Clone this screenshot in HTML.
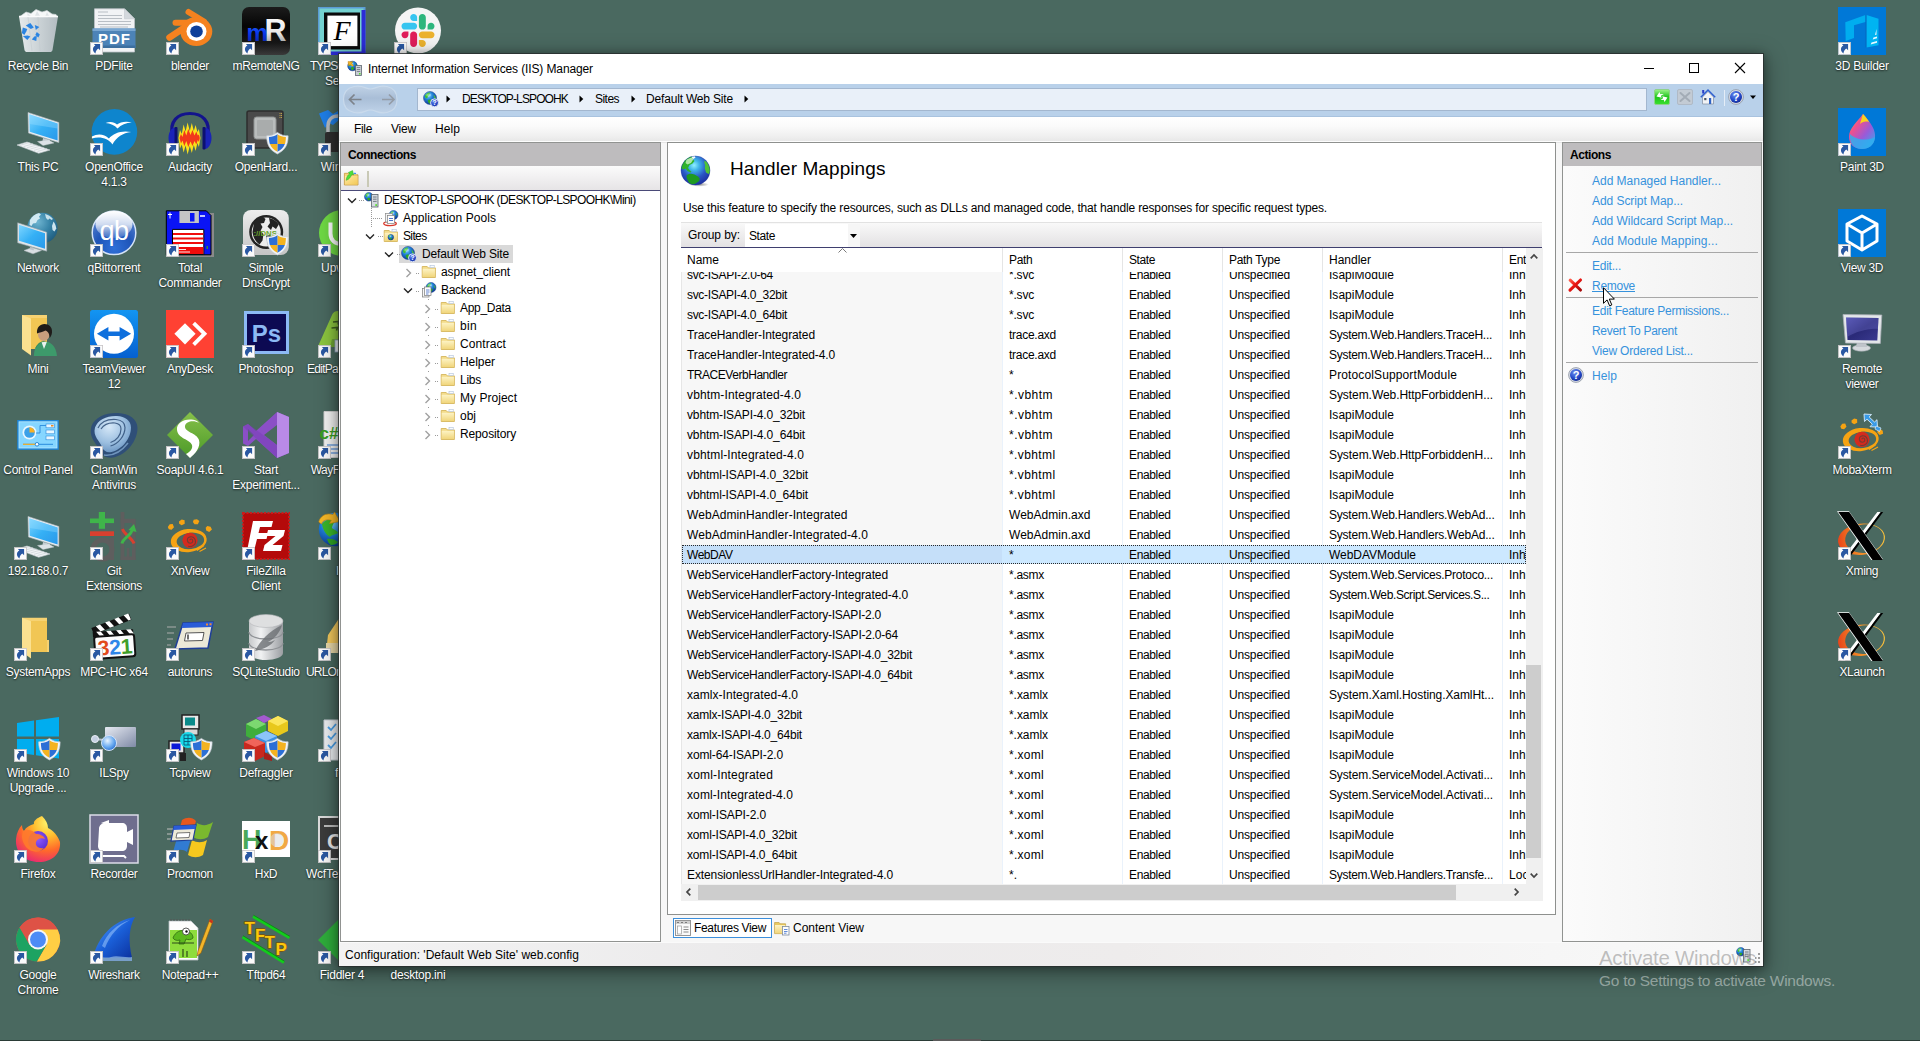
<!DOCTYPE html>
<html lang="en"><head><meta charset="utf-8"><title>Internet Information Services (IIS) Manager</title>
<style>
html,body{margin:0;padding:0}
body{width:1920px;height:1041px;overflow:hidden;position:relative;background:#4a6960;font-family:"Liberation Sans",sans-serif;font-size:11.5px;color:#000}
div,span,svg,a{position:absolute;box-sizing:border-box}
.t{white-space:pre;display:block}
.lbl{color:#fff;text-align:center;font-size:12px;line-height:15px;text-shadow:0 1px 2px rgba(0,0,0,.6),0 0 1.5px rgba(0,0,0,.4);white-space:pre;display:block}
svg{overflow:visible}

</style></head>
<body>
<svg width="0" height="0" style="left:0;top:0"><defs><radialGradient id="gg" cx=".38" cy=".3" r=".75"><stop offset="0" stop-color="#7fd0ff"/><stop offset=".45" stop-color="#1f7fd6"/><stop offset="1" stop-color="#0b2f8a"/></radialGradient><radialGradient id="hq" cx=".4" cy=".3" r=".8"><stop offset="0" stop-color="#6d8ff0"/><stop offset=".6" stop-color="#2348c8"/><stop offset="1" stop-color="#0d2282"/></radialGradient><linearGradient id="fold" x1="0" y1="0" x2="0" y2="1"><stop offset="0" stop-color="#fdf3c4"/><stop offset="1" stop-color="#f1d67c"/></linearGradient><linearGradient id="grn" x1="0" y1="0" x2="0" y2="1"><stop offset="0" stop-color="#9df58a"/><stop offset=".5" stop-color="#1fc41c"/><stop offset="1" stop-color="#39e02f"/></linearGradient><linearGradient id="fy" x1="0" y1="0" x2="1" y2="1"><stop offset="0" stop-color="#ffe9a6"/><stop offset="1" stop-color="#f3c956"/></linearGradient></defs></svg>
<svg style="left:14px;top:7px" width="48" height="48" viewBox="0 0 48 48"><defs><linearGradient id="rb" x1="0" y1="0" x2="1" y2="0"><stop offset="0" stop-color="#eef1f3"/><stop offset=".45" stop-color="#d5dbdf"/><stop offset="1" stop-color="#b9c1c7"/></linearGradient></defs><path d="M6 9.5l6-4.5 5 1.5 5-4 6 2.5 5-1.5 5 3.5 4 .5 1.5 2.5z" fill="#f6f8f9" stroke="#ccd2d6" stroke-width=".7"/><path d="M13 6l4 3-3 1zM23 4l3 5-5 0zM33 5l2 4-4 1z" fill="#dfe4e7"/><path d="M5 9.5h39l-5.5 33.5c-.3 1.4-1.3 2-2.8 2H13.3c-1.5 0-2.5-.6-2.8-2z" fill="url(#rb)" opacity=".95"/><path d="M5 9.5h39" stroke="#fafbfc" stroke-width="1.4"/><path d="M24 10l2 34M14 10l4 34M35 10l-4 34" stroke="#c3cacf" stroke-width=".8" opacity=".7"/><g fill="#2a84e2" transform="translate(-3.2 1)"><path d="M15 17.5l4.5-2.5 3.5 4.5-3 1.5z"/><path d="M11 25l1-5.5 4.5 1.5-1 2.5-2 3.5z"/><path d="M12 28l4.5 4 3-3.5-2.5-1z"/><path d="M21 31.5l4.5 1.5 .5-5-2.5 .5z"/><path d="M24 17l1 5 3.5-3z"/><path d="M26 24l3 2.5-1.5 3-3-2.5z"/></g></svg>
<span class="lbl" style="left:-22px;width:120px;top:59px;letter-spacing:-0.259px;padding-left:-0.259px">Recycle Bin</span>
<svg style="left:90px;top:7px" width="48" height="48" viewBox="0 0 48 48"><path d="M4.5 1.8h30l10 10V45H4.5z" fill="#f1f3f5" stroke="#bcc2c8" stroke-width=".8"/><path d="M34.5 1.8v10h10z" fill="#d3d8dd" stroke="#bcc2c8" stroke-width=".5"/><path d="M8 5h10M8 8.5h24M8 11.5h24M8 14.5h33M8 17.5h33M10 20h28" stroke="#b9bfc5" stroke-width="1.1"/><rect x="2.5" y="21.5" width="43" height="19.5" fill="#4c83b7"/><rect x="2.5" y="21.5" width="43" height="2.5" fill="#79a7d2"/><rect x="2.5" y="38.5" width="43" height="2.5" fill="#3c6f9f"/><text x="24.5" y="36.7" font-size="15" font-weight="bold" fill="#fff" text-anchor="middle" letter-spacing="1" font-family="Liberation Sans,sans-serif">PDF</text><g transform="translate(0 35)"><rect x=".4" y=".4" width="12.2" height="12.2" fill="#fbfbfb" stroke="#c6c3c6" stroke-width=".8"/><path d="M3.9 2.1H10.1V8.2L8.3 6.6C6.5 7.8 5.6 9.5 5.5 11.6 3.3 10 2.3 7.6 3.3 5.6 3.8 4.6 4.6 3.9 5.4 3.5z" fill="#2a58a2"/></g></svg>
<span class="lbl" style="left:54px;width:120px;top:59px;letter-spacing:-0.253px;padding-left:-0.253px">PDFlite</span>
<svg style="left:166px;top:7px" width="48" height="48" viewBox="0 0 48 48"><g stroke="#f5821f" stroke-linecap="round" fill="none"><path d="M22.5 5L38 14.5" stroke-width="6"/><path d="M9.5 15.8H27" stroke-width="6"/><path d="M3.5 30.5L20 19.5" stroke-width="6.5"/></g><ellipse cx="30.3" cy="24.5" rx="16" ry="14.6" fill="#f5821f"/><ellipse cx="30.5" cy="24.5" rx="10" ry="9.5" fill="#fff"/><ellipse cx="30.5" cy="24.5" rx="6.3" ry="6" fill="#0d3f9a"/><g transform="translate(0 35)"><rect x=".4" y=".4" width="12.2" height="12.2" fill="#fbfbfb" stroke="#c6c3c6" stroke-width=".8"/><path d="M3.9 2.1H10.1V8.2L8.3 6.6C6.5 7.8 5.6 9.5 5.5 11.6 3.3 10 2.3 7.6 3.3 5.6 3.8 4.6 4.6 3.9 5.4 3.5z" fill="#2a58a2"/></g></svg>
<span class="lbl" style="left:130px;width:120px;top:59px;letter-spacing:-0.257px;padding-left:-0.257px">blender</span>
<svg style="left:242px;top:7px" width="48" height="48" viewBox="0 0 48 48"><defs><linearGradient id="mr" x1="0" y1="0" x2="0" y2="1"><stop offset="0" stop-color="#1c1c1c"/><stop offset=".4" stop-color="#050505"/><stop offset=".75" stop-color="#161616"/><stop offset="1" stop-color="#3a3a3a"/></linearGradient><linearGradient id="mrm" x1="0" y1="0" x2="0" y2="1"><stop offset="0" stop-color="#3b7bff"/><stop offset=".5" stop-color="#0a3cf0"/><stop offset="1" stop-color="#0a1f9a"/></linearGradient><linearGradient id="mrr" x1="0" y1="0" x2="0" y2="1"><stop offset="0" stop-color="#ffffff"/><stop offset=".6" stop-color="#e8e8e8"/><stop offset="1" stop-color="#8a8a8a"/></linearGradient></defs><rect x="0" y="0" width="48" height="48" rx="7" fill="url(#mr)"/><text x="4.5" y="33.6" font-size="24" font-weight="bold" fill="url(#mrm)" font-family="Liberation Sans,sans-serif">m</text><text x="22.5" y="33.6" font-size="30.5" font-weight="bold" fill="url(#mrr)" font-family="Liberation Sans,sans-serif">R</text><g transform="translate(0 35)"><rect x=".4" y=".4" width="12.2" height="12.2" fill="#fbfbfb" stroke="#c6c3c6" stroke-width=".8"/><path d="M3.9 2.1H10.1V8.2L8.3 6.6C6.5 7.8 5.6 9.5 5.5 11.6 3.3 10 2.3 7.6 3.3 5.6 3.8 4.6 4.6 3.9 5.4 3.5z" fill="#2a58a2"/></g></svg>
<span class="lbl" style="left:206px;width:120px;top:59px;letter-spacing:-0.350px;padding-left:-0.350px">mRemoteNG</span>
<svg style="left:318px;top:7px" width="48" height="48" viewBox="0 0 48 48"><rect x="0" y="0" width="47.5" height="48" fill="#5b9bd4"/><rect x="1.5" y="1.5" width="44" height="45" fill="#74d2d0"/><rect x="43.5" y="3" width="4" height="45" fill="#2c2cd8"/><rect x="4" y="44.5" width="43.5" height="3.5" fill="#2c2cd8"/><rect x="6" y="5.5" width="36" height="37" fill="#0a0a0a"/><rect x="9.4" y="8.6" width="30" height="30.5" fill="#fff"/><text x="24" y="33" font-size="28" font-style="italic" fill="#000" text-anchor="middle" font-family="Liberation Serif,serif">F</text><g transform="translate(0 35)"><rect x=".4" y=".4" width="12.2" height="12.2" fill="#fbfbfb" stroke="#c6c3c6" stroke-width=".8"/><path d="M3.9 2.1H10.1V8.2L8.3 6.6C6.5 7.8 5.6 9.5 5.5 11.6 3.3 10 2.3 7.6 3.3 5.6 3.8 4.6 4.6 3.9 5.4 3.5z" fill="#2a58a2"/></g></svg>
<span class="lbl" style="left:310px;text-align:left;top:59px;letter-spacing:-1.028px">TYPSoft FTP</span>
<span class="lbl" style="left:282px;width:120px;top:74px;letter-spacing:-0.265px;padding-left:-0.265px">Server</span>
<svg style="left:394px;top:7px" width="48" height="48" viewBox="0 0 48 48"><circle cx="24" cy="23.6" r="23" fill="#f5f5f5"/><g transform="translate(7.5 7) scale(.2687)"><path d="M25.8 77.6c0 7.1-5.8 12.9-12.9 12.9S0 84.7 0 77.6s5.8-12.9 12.9-12.9h12.9v12.9zm6.5 0c0-7.1 5.8-12.9 12.9-12.9s12.9 5.8 12.9 12.9v32.3c0 7.1-5.8 12.9-12.9 12.9s-12.9-5.8-12.9-12.9V77.6z" fill="#e01e5a"/><path d="M45.2 25.8c-7.1 0-12.9-5.8-12.9-12.9S38.1 0 45.2 0s12.9 5.8 12.9 12.9v12.9H45.2zm0 6.5c7.1 0 12.9 5.8 12.9 12.9s-5.8 12.9-12.9 12.9H12.9C5.8 58.1 0 52.3 0 45.2s5.8-12.9 12.9-12.9h32.3z" fill="#36c5f0"/><path d="M97 45.2c0-7.1 5.8-12.9 12.9-12.9s12.9 5.8 12.9 12.9-5.8 12.9-12.9 12.9H97V45.2zm-6.5 0c0 7.1-5.8 12.9-12.9 12.9s-12.9-5.8-12.9-12.9V12.9C64.7 5.8 70.5 0 77.6 0s12.9 5.8 12.9 12.9v32.3z" fill="#2eb67d"/><path d="M77.6 97c7.1 0 12.9 5.8 12.9 12.9s-5.8 12.9-12.9 12.9-12.9-5.8-12.9-12.9V97h12.9zm0-6.5c-7.1 0-12.9-5.8-12.9-12.9s5.8-12.9 12.9-12.9h32.3c7.1 0 12.9 5.8 12.9 12.9s-5.8 12.9-12.9 12.9H77.6z" fill="#ecb22e"/></g><g transform="translate(0 35)"><rect x=".4" y=".4" width="12.2" height="12.2" fill="#fbfbfb" stroke="#c6c3c6" stroke-width=".8"/><path d="M3.9 2.1H10.1V8.2L8.3 6.6C6.5 7.8 5.6 9.5 5.5 11.6 3.3 10 2.3 7.6 3.3 5.6 3.8 4.6 4.6 3.9 5.4 3.5z" fill="#2a58a2"/></g></svg>
<span class="lbl" style="left:358px;width:120px;top:59px;letter-spacing:-0.264px;padding-left:-0.264px">Slack</span>
<svg style="left:14px;top:108px" width="48" height="48" viewBox="0 0 48 48"><defs><linearGradient id="scr" x1="0" y1="0" x2="1" y2="1"><stop offset="0" stop-color="#7fd6ff"/><stop offset=".5" stop-color="#35b0f5"/><stop offset="1" stop-color="#2a98ea"/></linearGradient></defs><path d="M14 4.5l30.8 10v20L14.5 25z" fill="#e9eef2" stroke="#b3bcc3" stroke-width=".6"/><path d="M15.3 6.3l28.3 9.2v17L15.7 23.8z" fill="url(#scr)"/><path d="M15.3 6.3l28.3 9.2v5L15.5 16z" fill="#9fe0ff" opacity=".35"/><path d="M29 30l7 2-.5 3.5-7-2z" fill="#c5cdd3"/><path d="M23.5 33.5l11 -1.5 5.5 3-11 2.5z" fill="#dde3e7" stroke="#c2cad0" stroke-width=".4"/><path d="M3 37l10-3 23 8-11.3 3.3z" fill="#f0f3f5" stroke="#c6cdd2" stroke-width=".6"/><path d="M6 37.3l9.5-2.8M9.5 38.6l9.5-2.8M13 39.8l9.5-2.8M16.5 41l9.5-2.8M20 42.3l9.5-2.8M23.5 43.5l9.5-2.8" stroke="#cbd2d7" stroke-width=".7"/></svg>
<span class="lbl" style="left:-22px;width:120px;top:160px;letter-spacing:-0.274px;padding-left:-0.274px">This PC</span>
<svg style="left:90px;top:108px" width="48" height="48" viewBox="0 0 48 48"><circle cx="24.4" cy="23.9" r="22.8" fill="#0e85cd"/><path d="M1.9 28.5c6-3.5 12.5-2.5 17 2 4.5-5.5 13-8.5 22.3-6.5-8.5 1-14.5 5-18.8 12.4C18.5 30.5 10 28 1.9 30.5z" fill="#fff"/><path d="M15.6 15c4.5-1.8 8.8-1 11.4 1.5 3-2.7 9.4-3.7 14.9-2-6 .3-10.8 2.4-14.4 6-2.8-3.4-7.3-5-11.9-5.5z" fill="#fff"/><g transform="translate(0 35)"><rect x=".4" y=".4" width="12.2" height="12.2" fill="#fbfbfb" stroke="#c6c3c6" stroke-width=".8"/><path d="M3.9 2.1H10.1V8.2L8.3 6.6C6.5 7.8 5.6 9.5 5.5 11.6 3.3 10 2.3 7.6 3.3 5.6 3.8 4.6 4.6 3.9 5.4 3.5z" fill="#2a58a2"/></g></svg>
<span class="lbl" style="left:54px;width:120px;top:160px;letter-spacing:-0.272px;padding-left:-0.272px">OpenOffice</span>
<span class="lbl" style="left:54px;width:120px;top:175px;letter-spacing:-0.240px;padding-left:-0.240px">4.1.3</span>
<svg style="left:166px;top:108px" width="48" height="48" viewBox="0 0 48 48"><path d="M6.5 28C3 13 12 5.5 24 5.5S45 13 41.5 28" fill="none" stroke="#13138c" stroke-width="3.2"/><path d="M9.5 19.5c-4 0-7 4.5-7 10.5s3 11 7 11z" fill="#1a23b8"/><path d="M38.5 19.5c4 0 7 4.5 7 10.5s-3 11-7 11z" fill="#1a23b8"/><rect x="8.5" y="19" width="3" height="22.5" rx="1" fill="#0d1170"/><rect x="36.5" y="19" width="3" height="22.5" rx="1" fill="#0d1170"/><path d="M12.5 30l1.5-8 1.8 4 1.8-9.5 2 7 2-9 2.2 8.5 2-8 2 8 1.8-6 1.8 7 1.5-3 1.6 9-1.6 9-1.5-4-1.8 8-1.8-6-2 8-2-7-2.2 8.5-2-9-2 7-1.8-8-1.8 4z" fill="#fbe01a"/><path d="M13.5 30l1.5-4 1.5 3 1.8-7 2 5.5 2-6.5 2.2 6 2-5 2 5.5 1.8-4 1.5 4 1.2-1 .8 3.5-.8 4-1.2-2-1.5 4.5-1.8-3.5-2 5-2-4.5-2.2 5.5-2-6-2 5-1.8-5.5-1.5 3z" fill="#f2381c"/><g transform="translate(0 35)"><rect x=".4" y=".4" width="12.2" height="12.2" fill="#fbfbfb" stroke="#c6c3c6" stroke-width=".8"/><path d="M3.9 2.1H10.1V8.2L8.3 6.6C6.5 7.8 5.6 9.5 5.5 11.6 3.3 10 2.3 7.6 3.3 5.6 3.8 4.6 4.6 3.9 5.4 3.5z" fill="#2a58a2"/></g></svg>
<span class="lbl" style="left:130px;width:120px;top:160px;letter-spacing:-0.259px;padding-left:-0.259px">Audacity</span>
<svg style="left:242px;top:108px" width="48" height="48" viewBox="0 0 48 48"><rect x="5" y="3" width="36" height="37" rx="2" fill="#4a4a4a"/><rect x="5" y="3" width="36" height="37" rx="2" fill="none" stroke="#2e2e2e" stroke-width="1.5"/><rect x="12" y="9" width="22" height="22" rx="2.5" fill="#b9bcbc" stroke="#8e9191" stroke-width="1"/><rect x="15" y="12" width="16" height="16" rx="1" fill="#a9acac"/><path d="M38 5v6M39.5 5v6" stroke="#d8b64a" stroke-width=".8" stroke-dasharray="1 1"/><g transform="translate(35.4 24.4) scale(1.13 .98) translate(-35.4 -24.4)"><path d="M35.4 24.4c3 2.5 6 3.5 9.5 3.5 0 9-2.5 14.5-9.5 18.5-7-4-9.5-9.5-9.5-18.5 3.5 0 6.5-1 9.5-3.5z" fill="#f0f4f8" stroke="#c8ced6" stroke-width=".6"/><path d="M35.4 26.4c2.3 1.8 4.8 2.7 7.5 2.8 0 3-.3 5.2-.8 7H35.4z" fill="#f4b320"/><path d="M35.4 26.4c-2.3 1.8-4.8 2.7-7.5 2.8 0 3 .3 5.2 .8 7H35.4z" fill="#2c6fd6"/><path d="M35.4 36.2h6.6c-1.2 3.5-3.3 6-6.6 8z" fill="#2c6fd6"/><path d="M35.4 36.2h-6.6c1.2 3.5 3.3 6 6.6 8z" fill="#f4b320"/></g><g transform="translate(0 35)"><rect x=".4" y=".4" width="12.2" height="12.2" fill="#fbfbfb" stroke="#c6c3c6" stroke-width=".8"/><path d="M3.9 2.1H10.1V8.2L8.3 6.6C6.5 7.8 5.6 9.5 5.5 11.6 3.3 10 2.3 7.6 3.3 5.6 3.8 4.6 4.6 3.9 5.4 3.5z" fill="#2a58a2"/></g></svg>
<span class="lbl" style="left:206px;width:120px;top:160px;letter-spacing:-0.267px;padding-left:-0.267px">OpenHard...</span>
<svg style="left:318px;top:108px" width="48" height="48" viewBox="0 0 48 48"><path d="M1 5.5l9-3.5 5 4 5-3 1 9-6 5-4-2-4 5z" fill="#1f7fe8"/><path d="M10 25v-7c0-6 4-10 10-10s10 4 10 10v7" fill="none" stroke="#b8bcc0" stroke-width="3.5"/><rect x="7" y="24" width="26" height="20" rx="2" fill="#2e2e2e"/><g transform="translate(0 35)"><rect x=".4" y=".4" width="12.2" height="12.2" fill="#fbfbfb" stroke="#c6c3c6" stroke-width=".8"/><path d="M3.9 2.1H10.1V8.2L8.3 6.6C6.5 7.8 5.6 9.5 5.5 11.6 3.3 10 2.3 7.6 3.3 5.6 3.8 4.6 4.6 3.9 5.4 3.5z" fill="#2a58a2"/></g></svg>
<span class="lbl" style="left:320.75px;text-align:left;top:160px;letter-spacing:0.000px">WinSCP</span>
<svg style="left:14px;top:209px" width="48" height="48" viewBox="0 0 48 48"><defs><radialGradient id="ng" cx=".35" cy=".3" r=".8"><stop offset="0" stop-color="#6fb4d0"/><stop offset=".5" stop-color="#3784a8"/><stop offset="1" stop-color="#1d587a"/></radialGradient></defs><circle cx="28.4" cy="19" r="15.2" fill="url(#ng)"/><path d="M16 11c2-3.5 5-6 9-7l2 1.5-2 2 1 2-2.5 1.5-1.5 3-3 .5-1.5 2.5-2-1z" fill="#dff1f7" opacity=".9"/><path d="M31 5c3 .5 6 2.5 8 5l-1.5 1-2-1.5-1.5 1.5-2-2z" fill="#dff1f7" opacity=".85"/><path d="M39.5 12.5c1.5 2 2.5 4.5 2.8 7l-1.8 3-2-1.5-.5-4z" fill="#dff1f7" opacity=".9"/><path d="M3.7 13.8l29 9.4v19L3.7 33.8z" fill="#dfe6ea" stroke="#9fa9b0" stroke-width=".6"/><path d="M5 15.8l26 8.5v15.5L5 31.8z" fill="url(#scr)"/><path d="M10 41.5l8-3 9.5 3-8.5 3.3z" fill="#d9dfe3" stroke="#b4bcc2" stroke-width=".5"/><path d="M16 38l4 1.3-.3 2.2-4-1.3z" fill="#bcc4ca"/></svg>
<span class="lbl" style="left:-22px;width:120px;top:261px;letter-spacing:-0.283px;padding-left:-0.283px">Network</span>
<svg style="left:90px;top:209px" width="48" height="48" viewBox="0 0 48 48"><defs><radialGradient id="qb" cx=".5" cy=".85" r=".9"><stop offset="0" stop-color="#2f6fd8"/><stop offset=".45" stop-color="#1f55b8"/><stop offset="1" stop-color="#6a90d4"/></radialGradient><linearGradient id="qbg" x1="0" y1="0" x2="0" y2="1"><stop offset="0" stop-color="#ffffff" stop-opacity="1"/><stop offset=".5" stop-color="#ffffff" stop-opacity=".75"/><stop offset="1" stop-color="#ffffff" stop-opacity=".12"/></linearGradient></defs><circle cx="24" cy="23.8" r="21.8" fill="url(#qb)" stroke="#d5e3f7" stroke-width="1.5"/><ellipse cx="24" cy="15.5" rx="18.5" ry="13.5" fill="url(#qbg)"/><text x="24" y="31" font-size="27" fill="#fff" text-anchor="middle" letter-spacing="-.5" font-family="Liberation Sans,sans-serif">qb</text><g transform="translate(0 35)"><rect x=".4" y=".4" width="12.2" height="12.2" fill="#fbfbfb" stroke="#c6c3c6" stroke-width=".8"/><path d="M3.9 2.1H10.1V8.2L8.3 6.6C6.5 7.8 5.6 9.5 5.5 11.6 3.3 10 2.3 7.6 3.3 5.6 3.8 4.6 4.6 3.9 5.4 3.5z" fill="#2a58a2"/></g></svg>
<span class="lbl" style="left:54px;width:120px;top:261px;letter-spacing:-0.226px;padding-left:-0.226px">qBittorrent</span>
<svg style="left:166px;top:209px" width="48" height="48" viewBox="0 0 48 48"><rect x="2" y="4" width="46" height="44" fill="#8a8a8a"/><path d="M.3 1.8h40l4.7 4.7v39.3H.3z" fill="#0a14f5" stroke="#000" stroke-width="1"/><rect x="13.4" y="2" width="19.5" height="12" fill="#c4c4c4"/><rect x="24" y="4" width="4.5" height="8.5" fill="#0a14f5"/><path d="M6.5 20.4h31.3v25H6.5z" fill="#fff" stroke="#000" stroke-width="1"/><path d="M7 25h30.3M7 29.5h30.3M7 34h30.3" stroke="#f00c0c" stroke-width="1.8"/><rect x="7" y="38" width="30.3" height="7" fill="#f00c0c"/><path d="M12 40.5h8M12 43h12" stroke="#fff" stroke-width=".9"/><path d="M2 5.5h4M4 3.5v6" stroke="#fff" stroke-width="1"/><path d="M34 7h5" stroke="#fff" stroke-width="1.5"/><rect x="40.5" y="37" width="1.5" height="3" fill="#3a8a3a"/><g transform="translate(0 35)"><rect x=".4" y=".4" width="12.2" height="12.2" fill="#fbfbfb" stroke="#c6c3c6" stroke-width=".8"/><path d="M3.9 2.1H10.1V8.2L8.3 6.6C6.5 7.8 5.6 9.5 5.5 11.6 3.3 10 2.3 7.6 3.3 5.6 3.8 4.6 4.6 3.9 5.4 3.5z" fill="#2a58a2"/></g></svg>
<span class="lbl" style="left:130px;width:120px;top:261px;letter-spacing:-0.228px;padding-left:-0.228px">Total</span>
<span class="lbl" style="left:130px;width:120px;top:276px;letter-spacing:-0.330px;padding-left:-0.330px">Commander</span>
<svg style="left:242px;top:209px" width="48" height="48" viewBox="0 0 48 48"><defs><linearGradient id="dc" x1="0" y1="0" x2="0" y2="1"><stop offset="0" stop-color="#ededed"/><stop offset="1" stop-color="#c4c4c4"/></linearGradient></defs><rect x="1" y="1" width="45.8" height="45" rx="8" fill="url(#dc)"/><circle cx="24.2" cy="23" r="17" fill="#232323"/><circle cx="24.2" cy="23" r="14.5" fill="#ececec"/><path d="M12 14c2-3 5-5.5 8.5-6.5l3 2.5-1.5 4-3.5 .5 2 3.5-2 4 3 3 -1 6.5-3 4c-4-3-6.5-7-7-12.5z" fill="#242424"/><path d="M27 9c4 .5 7.5 3 9.8 6.5L34 20l-3.5-2.5L29 21l-3.5-3.5 2.5-3.5z" fill="#242424"/><path d="M24 27l4-1 3 3-2 5-3 2.5z" fill="#242424"/><text x="11.5" y="26.5" font-size="7.8" font-weight="bold" fill="#6aa52e" font-family="Liberation Sans,sans-serif">://DNS</text><g transform="translate(35.4 24.4) scale(1.13 .98) translate(-35.4 -24.4)"><path d="M35.4 24.4c3 2.5 6 3.5 9.5 3.5 0 9-2.5 14.5-9.5 18.5-7-4-9.5-9.5-9.5-18.5 3.5 0 6.5-1 9.5-3.5z" fill="#f0f4f8" stroke="#c8ced6" stroke-width=".6"/><path d="M35.4 26.4c2.3 1.8 4.8 2.7 7.5 2.8 0 3-.3 5.2-.8 7H35.4z" fill="#f4b320"/><path d="M35.4 26.4c-2.3 1.8-4.8 2.7-7.5 2.8 0 3 .3 5.2 .8 7H35.4z" fill="#2c6fd6"/><path d="M35.4 36.2h6.6c-1.2 3.5-3.3 6-6.6 8z" fill="#2c6fd6"/><path d="M35.4 36.2h-6.6c1.2 3.5 3.3 6 6.6 8z" fill="#f4b320"/></g><g transform="translate(0 35)"><rect x=".4" y=".4" width="12.2" height="12.2" fill="#fbfbfb" stroke="#c6c3c6" stroke-width=".8"/><path d="M3.9 2.1H10.1V8.2L8.3 6.6C6.5 7.8 5.6 9.5 5.5 11.6 3.3 10 2.3 7.6 3.3 5.6 3.8 4.6 4.6 3.9 5.4 3.5z" fill="#2a58a2"/></g></svg>
<span class="lbl" style="left:206px;width:120px;top:261px;letter-spacing:-0.275px;padding-left:-0.275px">Simple</span>
<span class="lbl" style="left:206px;width:120px;top:276px;letter-spacing:-0.281px;padding-left:-0.281px">DnsCrypt</span>
<svg style="left:318px;top:209px" width="48" height="48" viewBox="0 0 48 48"><circle cx="24" cy="24" r="23" fill="#6fda44"/><path d="M12.5 13.5v11c0 6.5 4.5 10.5 11.5 10.5s11.5-4 11.5-10.5v-11" fill="none" stroke="#fff" stroke-width="4"/><g transform="translate(0 35)"><rect x=".4" y=".4" width="12.2" height="12.2" fill="#fbfbfb" stroke="#c6c3c6" stroke-width=".8"/><path d="M3.9 2.1H10.1V8.2L8.3 6.6C6.5 7.8 5.6 9.5 5.5 11.6 3.3 10 2.3 7.6 3.3 5.6 3.8 4.6 4.6 3.9 5.4 3.5z" fill="#2a58a2"/></g></svg>
<span class="lbl" style="left:321px;text-align:left;top:261px;letter-spacing:0.000px">Upwork</span>
<svg style="left:14px;top:310px" width="48" height="48" viewBox="0 0 48 48"><path d="M8 5h25v34H8z" fill="#f6d272"/><path d="M16 8h17v31H16z" fill="#f1c654"/><path d="M8 5l9 3.5v37l-9-6.5z" fill="#fbe190"/><path d="M19.8 46c.5-9 4-14.5 10.5-14.5S42 36 43 46z" fill="#3d9a6b"/><path d="M27.5 32l2.5 7 2.8-7z" fill="#eaf2ee"/><path d="M30.3 31.5c-4 0-7 3-9 7" fill="none" stroke="#2f7d55" stroke-width="1" opacity=".6"/><ellipse cx="29.8" cy="24.5" rx="5.8" ry="6.5" fill="#c79e7e"/><path d="M23 23.5c-.5-6 3-9.5 7.5-9.5s8 3 7.5 8.5c-.3 3-1.5 4.5-2.5 5.5.3-3-1-6.5-4-7.5-3 1.5-6 2-8.5 3z" fill="#1e1b19"/></svg>
<span class="lbl" style="left:-22px;width:120px;top:362px;letter-spacing:-0.248px;padding-left:-0.248px">Mini</span>
<svg style="left:90px;top:310px" width="48" height="48" viewBox="0 0 48 48"><defs><linearGradient id="tv" x1="0" y1="0" x2="0" y2="1"><stop offset="0" stop-color="#1395f2"/><stop offset="1" stop-color="#0660d0"/></linearGradient></defs><rect x="0" y="0" width="48" height="48" rx="2.5" fill="url(#tv)"/><circle cx="24" cy="23.8" r="20" fill="#fff"/><path d="M6.9 23.8l11.5-6.8v4.6h11.2V17l11.5 6.8-11.5 6.8V26H18.4v4.6z" fill="#0e6fdd"/><g transform="translate(0 35)"><rect x=".4" y=".4" width="12.2" height="12.2" fill="#fbfbfb" stroke="#c6c3c6" stroke-width=".8"/><path d="M3.9 2.1H10.1V8.2L8.3 6.6C6.5 7.8 5.6 9.5 5.5 11.6 3.3 10 2.3 7.6 3.3 5.6 3.8 4.6 4.6 3.9 5.4 3.5z" fill="#2a58a2"/></g></svg>
<span class="lbl" style="left:54px;width:120px;top:362px;letter-spacing:-0.296px;padding-left:-0.296px">TeamViewer</span>
<span class="lbl" style="left:54px;width:120px;top:377px;letter-spacing:-0.300px;padding-left:-0.300px">12</span>
<svg style="left:166px;top:310px" width="48" height="48" viewBox="0 0 48 48"><rect x="0" y="0" width="48" height="48" fill="#ff4133"/><path d="M8.4 23.8L19 13.2l10.6 10.6L19 34.4z" fill="#fff"/><path d="M26.3 14.4l2.7-2.7 12.2 12.1L29 35.9l-2.7-2.7 9.4-9.4z" fill="#fff"/><g transform="translate(0 35)"><rect x=".4" y=".4" width="12.2" height="12.2" fill="#fbfbfb" stroke="#c6c3c6" stroke-width=".8"/><path d="M3.9 2.1H10.1V8.2L8.3 6.6C6.5 7.8 5.6 9.5 5.5 11.6 3.3 10 2.3 7.6 3.3 5.6 3.8 4.6 4.6 3.9 5.4 3.5z" fill="#2a58a2"/></g></svg>
<span class="lbl" style="left:130px;width:120px;top:362px;letter-spacing:-0.309px;padding-left:-0.309px">AnyDesk</span>
<svg style="left:242px;top:310px" width="48" height="48" viewBox="0 0 48 48"><rect x="2" y="1" width="45" height="43" fill="#8cb9f4"/><rect x="5" y="4" width="39" height="37" fill="#0c0a52"/><text x="24.5" y="32" font-size="24" font-weight="bold" fill="#8cb9f4" text-anchor="middle" font-family="Liberation Sans,sans-serif">Ps</text><g transform="translate(0 35)"><rect x=".4" y=".4" width="12.2" height="12.2" fill="#fbfbfb" stroke="#c6c3c6" stroke-width=".8"/><path d="M3.9 2.1H10.1V8.2L8.3 6.6C6.5 7.8 5.6 9.5 5.5 11.6 3.3 10 2.3 7.6 3.3 5.6 3.8 4.6 4.6 3.9 5.4 3.5z" fill="#2a58a2"/></g></svg>
<span class="lbl" style="left:206px;width:120px;top:362px;letter-spacing:-0.287px;padding-left:-0.287px">Photoshop</span>
<svg style="left:318px;top:310px" width="48" height="48" viewBox="0 0 48 48"><path d="M1 34L14 5c1-2.5 3-4 6-4h6v36H3c-2 0-3-1.3-2-3z" fill="#8cc63f"/><path d="M12 37l2-8h12v8z" fill="#6fa536"/><path d="M15 12l6-.5-1 3M13.5 18l6-.5-1 3" stroke="#3f5f22" stroke-width="1.6" fill="none"/><rect x="17" y="30" width="8" height="12" fill="#e8eef5" stroke="#8fa3bd" stroke-width=".8"/><g transform="translate(0 35)"><rect x=".4" y=".4" width="12.2" height="12.2" fill="#fbfbfb" stroke="#c6c3c6" stroke-width=".8"/><path d="M3.9 2.1H10.1V8.2L8.3 6.6C6.5 7.8 5.6 9.5 5.5 11.6 3.3 10 2.3 7.6 3.3 5.6 3.8 4.6 4.6 3.9 5.4 3.5z" fill="#2a58a2"/></g></svg>
<span class="lbl" style="left:307px;text-align:left;top:362px;letter-spacing:-0.728px">EditPad Lite</span>
<svg style="left:14px;top:411px" width="48" height="48" viewBox="0 0 48 48"><rect x="3.2" y="9" width="41.6" height="29.8" fill="#1f86d8"/><rect x="5" y="10.8" width="38" height="26.2" fill="#86d6ff"/><rect x="5" y="10.8" width="38" height="26.2" fill="none" stroke="#b8e8ff" stroke-width=".8"/><circle cx="15.5" cy="21.5" r="7" fill="#e9f7ff"/><circle cx="15.5" cy="21.5" r="5.3" fill="#3aa0e8"/><path d="M15.5 21.5v-5.3a5.3 5.3 0 0 1 5.3 5.3z" fill="#f9b021"/><path d="M22 22h4v-7.5h6" fill="none" stroke="#2a8bdc" stroke-width=".9"/><rect x="32" y="13" width="8.5" height="3.8" fill="#e9f7ff" stroke="#2a8bdc" stroke-width=".6"/><rect x="32" y="19" width="8.5" height="3.8" fill="#e9f7ff" stroke="#2a8bdc" stroke-width=".6"/><rect x="32" y="25" width="8.5" height="3.8" fill="#e9f7ff" stroke="#2a8bdc" stroke-width=".6"/><rect x="37" y="14" width="2.5" height="1.5" fill="#f08a1e"/><path d="M9 33.3h30" stroke="#2a8bdc" stroke-width="1"/><path d="M9 33.3h12" stroke="#f9b021" stroke-width="1.2"/><circle cx="23" cy="33.3" r="1.8" fill="#fff" stroke="#1f7fd0" stroke-width=".9"/></svg>
<span class="lbl" style="left:-22px;width:120px;top:463px;letter-spacing:-0.252px;padding-left:-0.252px">Control Panel</span>
<svg style="left:90px;top:411px" width="48" height="48" viewBox="0 0 48 48"><defs><radialGradient id="cw" cx=".4" cy=".3" r=".8"><stop offset="0" stop-color="#d6e8f8"/><stop offset=".55" stop-color="#9cbfe0"/><stop offset="1" stop-color="#5f8bbb"/></radialGradient></defs><path d="M1.5 15C5 6 16 1.5 28 2c11 .5 19.5 6 19.5 15 0 13-11 27-24.5 29.5-6 1-11-1.5-13-6.5C7.5 33-2 27 1.5 15z" fill="#2f4f78"/><path d="M5 16.5C8 8.5 17 4.5 27 5c8 .5 14 4.5 14 11.5 0 10.5-8.5 22-19.5 24.5-4.5 1-8-1-9.5-5C10 30 2.5 25.5 5 16.5z" fill="url(#cw)"/><path d="M8 17c3-6 10-9 18-8.5 5 .5 9 3 9 8 0 8-6.5 16.5-14.5 18.5M11 18c3-4.5 8-6.5 14-6 3.5 .5 6 2.5 6 6 0 6-4.5 12-10.5 13.5" fill="none" stroke="#2f4f78" stroke-width="1.2" opacity=".85"/><path d="M14 44c8 1 17-3 24-12" fill="none" stroke="#7fa5cc" stroke-width="1.5" opacity=".8"/><g transform="translate(0 35)"><rect x=".4" y=".4" width="12.2" height="12.2" fill="#fbfbfb" stroke="#c6c3c6" stroke-width=".8"/><path d="M3.9 2.1H10.1V8.2L8.3 6.6C6.5 7.8 5.6 9.5 5.5 11.6 3.3 10 2.3 7.6 3.3 5.6 3.8 4.6 4.6 3.9 5.4 3.5z" fill="#2a58a2"/></g></svg>
<span class="lbl" style="left:54px;width:120px;top:463px;letter-spacing:-0.313px;padding-left:-0.313px">ClamWin</span>
<span class="lbl" style="left:54px;width:120px;top:478px;letter-spacing:-0.230px;padding-left:-0.230px">Antivirus</span>
<svg style="left:166px;top:411px" width="48" height="48" viewBox="0 0 48 48"><defs><linearGradient id="su" x1="0" y1="0" x2="0" y2="1"><stop offset="0" stop-color="#86c04a"/><stop offset="1" stop-color="#4c9a28"/></linearGradient></defs><path d="M24 1l23 23-23 23L1 24z" fill="url(#su)"/><path d="M33 12c-5-3-13-2-14 3-1 6 12 7 14 14 2 7-4 14-9 18l-4-4c4-2 7-5 6-9-2-6-14-6-15-15-1-8 10-13 20-9z" fill="#fff"/><g transform="translate(0 35)"><rect x=".4" y=".4" width="12.2" height="12.2" fill="#fbfbfb" stroke="#c6c3c6" stroke-width=".8"/><path d="M3.9 2.1H10.1V8.2L8.3 6.6C6.5 7.8 5.6 9.5 5.5 11.6 3.3 10 2.3 7.6 3.3 5.6 3.8 4.6 4.6 3.9 5.4 3.5z" fill="#2a58a2"/></g></svg>
<span class="lbl" style="left:130px;width:120px;top:463px;letter-spacing:-0.263px;padding-left:-0.263px">SoapUI 4.6.1</span>
<svg style="left:242px;top:411px" width="48" height="48" viewBox="0 0 48 48"><path d="M35 1l12 5v36l-12 5-21-19-8 7-5-2.5v-17L6 13l8 7z" fill="#8b4fc6"/><path d="M35 1l12 5v36l-12 5z" fill="#b98ae8"/><path d="M6 18v12l6-6z" fill="#4a6960"/><path d="M35 14L22 24l13 10z" fill="#4a6960"/><path d="M1 15.5l5-2.5 29 21v13z" fill="#7a3fb8" opacity=".55"/><g transform="translate(0 35)"><rect x=".4" y=".4" width="12.2" height="12.2" fill="#fbfbfb" stroke="#c6c3c6" stroke-width=".8"/><path d="M3.9 2.1H10.1V8.2L8.3 6.6C6.5 7.8 5.6 9.5 5.5 11.6 3.3 10 2.3 7.6 3.3 5.6 3.8 4.6 4.6 3.9 5.4 3.5z" fill="#2a58a2"/></g></svg>
<span class="lbl" style="left:206px;width:120px;top:463px;letter-spacing:-0.228px;padding-left:-0.228px">Start</span>
<span class="lbl" style="left:206px;width:120px;top:478px;letter-spacing:-0.245px;padding-left:-0.245px">Experiment...</span>
<svg style="left:318px;top:411px" width="48" height="48" viewBox="0 0 48 48"><path d="M6 .5h18v46H6z" fill="#f4f4f4" stroke="#cfcfcf"/><text x="1.5" y="28" font-size="17" font-weight="bold" fill="#38a020" font-family="Liberation Sans,sans-serif">c#</text><path d="M9 34h14M9 38h14M9 42h14" stroke="#6f9fdc" stroke-width="1.3"/><g transform="translate(0 35)"><rect x=".4" y=".4" width="12.2" height="12.2" fill="#fbfbfb" stroke="#c6c3c6" stroke-width=".8"/><path d="M3.9 2.1H10.1V8.2L8.3 6.6C6.5 7.8 5.6 9.5 5.5 11.6 3.3 10 2.3 7.6 3.3 5.6 3.8 4.6 4.6 3.9 5.4 3.5z" fill="#2a58a2"/></g></svg>
<span class="lbl" style="left:310.75px;text-align:left;top:463px;letter-spacing:-0.512px">WayFinder</span>
<svg style="left:14px;top:512px" width="48" height="48" viewBox="0 0 48 48"><defs><linearGradient id="scr" x1="0" y1="0" x2="1" y2="1"><stop offset="0" stop-color="#7fd6ff"/><stop offset=".5" stop-color="#35b0f5"/><stop offset="1" stop-color="#2a98ea"/></linearGradient></defs><path d="M14 4.5l30.8 10v20L14.5 25z" fill="#e9eef2" stroke="#b3bcc3" stroke-width=".6"/><path d="M15.3 6.3l28.3 9.2v17L15.7 23.8z" fill="url(#scr)"/><path d="M15.3 6.3l28.3 9.2v5L15.5 16z" fill="#9fe0ff" opacity=".35"/><path d="M29 30l7 2-.5 3.5-7-2z" fill="#c5cdd3"/><path d="M23.5 33.5l11 -1.5 5.5 3-11 2.5z" fill="#dde3e7" stroke="#c2cad0" stroke-width=".4"/><path d="M3 37l10-3 23 8-11.3 3.3z" fill="#f0f3f5" stroke="#c6cdd2" stroke-width=".6"/><path d="M6 37.3l9.5-2.8M9.5 38.6l9.5-2.8M13 39.8l9.5-2.8M16.5 41l9.5-2.8M20 42.3l9.5-2.8M23.5 43.5l9.5-2.8" stroke="#cbd2d7" stroke-width=".7"/><g transform="translate(0 35)"><rect x=".4" y=".4" width="12.2" height="12.2" fill="#fbfbfb" stroke="#c6c3c6" stroke-width=".8"/><path d="M3.9 2.1H10.1V8.2L8.3 6.6C6.5 7.8 5.6 9.5 5.5 11.6 3.3 10 2.3 7.6 3.3 5.6 3.8 4.6 4.6 3.9 5.4 3.5z" fill="#2a58a2"/></g></svg>
<span class="lbl" style="left:-22px;width:120px;top:564px;letter-spacing:-0.259px;padding-left:-0.259px">192.168.0.7</span>
<svg style="left:90px;top:512px" width="48" height="48" viewBox="0 0 48 48"><rect x="0" y="6.5" width="24" height="4.6" fill="#3fb54a"/><rect x="8.8" y="0" width="6.2" height="16.8" fill="#3fb54a"/><rect x="0" y="19.3" width="24" height="4.7" fill="#d8402f"/><circle cx="12.5" cy="37.5" r="9.5" fill="none" stroke="#5e5e5e" stroke-width="5"/><rect x="19.5" y="25.5" width="4.5" height="22.5" fill="#5e5e5e"/><rect x="30.6" y="0" width="3.8" height="48" fill="#5e5e5e"/><rect x="30.6" y="6.8" width="15" height="4.2" fill="#5e5e5e"/><rect x="42" y="11" width="3.6" height="37" fill="#5e5e5e"/><rect x="30.6" y="44.5" width="15" height="3.5" fill="#5e5e5e"/><rect x="36.8" y="36" width="2.6" height="10" fill="#5e5e5e"/><path d="M32.5 17c2 6 9 8 11.5 14.5" stroke="#d8402f" stroke-width="3" fill="none"/><path d="M32 31.5c1-6 9-7 10.5-14.5" stroke="#3fb54a" stroke-width="3" fill="none"/><path d="M38.5 18l5.5-6 2.5 8z" fill="#3fb54a"/><g transform="translate(0 35)"><rect x=".4" y=".4" width="12.2" height="12.2" fill="#fbfbfb" stroke="#c6c3c6" stroke-width=".8"/><path d="M3.9 2.1H10.1V8.2L8.3 6.6C6.5 7.8 5.6 9.5 5.5 11.6 3.3 10 2.3 7.6 3.3 5.6 3.8 4.6 4.6 3.9 5.4 3.5z" fill="#2a58a2"/></g></svg>
<span class="lbl" style="left:54px;width:120px;top:564px;letter-spacing:-0.230px;padding-left:-0.230px">Git</span>
<span class="lbl" style="left:54px;width:120px;top:579px;letter-spacing:-0.264px;padding-left:-0.264px">Extensions</span>
<svg style="left:166px;top:512px" width="48" height="48" viewBox="0 0 48 48"><path fill-rule="evenodd" d="M4.7 28.5a18 11.5 0 1 0 36 0a18 11.5 0 1 0 -36 0zM10.5 29a13.8 8.2 0 1 1 27.6 0a13.8 8.2 0 1 1 -27.6 0z" fill="#f6a313" transform="rotate(-6 23 28)"/><circle cx="24" cy="28.3" r="7.6" fill="#d42a1e"/><path d="M24 28.3c0-1.8 2.8-1.8 2.8 .6 0 3-4.8 3.4-5.4-.5-.6-4 5.8-5.3 7.8-.6 1.5 4.5-3 7.5-7 6.5" fill="none" stroke="#54403a" stroke-width="1.1" opacity=".75"/><path d="M31 38.5l7-5M33.5 39.5l6.5-3.5" stroke="#f6a313" stroke-width="1.2"/><path d="M-2.8 -1.5l3-1.5 2.8 1.2-.6 3.6-3.2 .8-2.2-1.8z" fill="#f6a313" transform="translate(5 15) rotate(-30)"/><path d="M-2.8 -1.5l3-1.5 2.8 1.2-.6 3.6-3.2 .8-2.2-1.8z" fill="#f6a313" transform="translate(16 10.5) rotate(-10)"/><path d="M-2.8 -1.5l3-1.5 2.8 1.2-.6 3.6-3.2 .8-2.2-1.8z" fill="#f6a313" transform="translate(30 10) rotate(15)"/><path d="M-2.8 -1.5l3-1.5 2.8 1.2-.6 3.6-3.2 .8-2.2-1.8z" fill="#f6a313" transform="translate(42.5 17) rotate(40)"/><g transform="translate(0 35)"><rect x=".4" y=".4" width="12.2" height="12.2" fill="#fbfbfb" stroke="#c6c3c6" stroke-width=".8"/><path d="M3.9 2.1H10.1V8.2L8.3 6.6C6.5 7.8 5.6 9.5 5.5 11.6 3.3 10 2.3 7.6 3.3 5.6 3.8 4.6 4.6 3.9 5.4 3.5z" fill="#2a58a2"/></g></svg>
<span class="lbl" style="left:130px;width:120px;top:564px;letter-spacing:-0.304px;padding-left:-0.304px">XnView</span>
<svg style="left:242px;top:512px" width="48" height="48" viewBox="0 0 48 48"><rect x="1" y="1" width="46" height="46" fill="#b40a0a" stroke="#c81c1c" stroke-width="2" stroke-dasharray="2 1.5"/><path d="M11 9h20l-1.5 6H18l-1.5 6H26l-1.5 6H15l-3 12H5z" fill="#fff"/><path d="M26 18h17l-1.5 6-11 9h10L39 39H21l1.5-6 11-9H24.5z" fill="#fff"/><g transform="translate(0 35)"><rect x=".4" y=".4" width="12.2" height="12.2" fill="#fbfbfb" stroke="#c6c3c6" stroke-width=".8"/><path d="M3.9 2.1H10.1V8.2L8.3 6.6C6.5 7.8 5.6 9.5 5.5 11.6 3.3 10 2.3 7.6 3.3 5.6 3.8 4.6 4.6 3.9 5.4 3.5z" fill="#2a58a2"/></g></svg>
<span class="lbl" style="left:206px;width:120px;top:564px;letter-spacing:-0.207px;padding-left:-0.207px">FileZilla</span>
<span class="lbl" style="left:206px;width:120px;top:579px;letter-spacing:-0.230px;padding-left:-0.230px">Client</span>
<svg style="left:318px;top:512px" width="48" height="48" viewBox="0 0 48 48"><circle cx="17.5" cy="17.5" r="16.7" fill="url(#gg)"/><path d="M4 12c3-4 8-6 12-4 1 3-2 5-2 8 2 2 5 2 6 5-2 2-6 1-8 4-4-2-7-7-8-13z" fill="#39b52a"/><path d="M9 27c3-1 8 0 11 3-1 2-4 3-7 3-2-1-3-3-4-6z" fill="#2fa524"/><path d="M22 6c3 1 6 3 8 6-2 1-5 0-7-2z" fill="#39b52a"/><path d="M.8 10C2 4 8 .5 15 2.5l1.5-2.5 5.5 9.5-10.5 2 1.8-3.2C9 7 5 8 3.5 12z" fill="#f7b928" stroke="#c8870c" stroke-width=".6"/><g transform="translate(0 35)"><rect x=".4" y=".4" width="12.2" height="12.2" fill="#fbfbfb" stroke="#c6c3c6" stroke-width=".8"/><path d="M3.9 2.1H10.1V8.2L8.3 6.6C6.5 7.8 5.6 9.5 5.5 11.6 3.3 10 2.3 7.6 3.3 5.6 3.8 4.6 4.6 3.9 5.4 3.5z" fill="#2a58a2"/></g></svg>
<span class="lbl" style="left:336px;text-align:left;top:564px;letter-spacing:0.000px">IIS</span>
<svg style="left:14px;top:613px" width="48" height="48" viewBox="0 0 48 48"><path d="M8 4.7h25v22.3h2v12h-27z" fill="#f6d272"/><path d="M16 8h17v31H16z" fill="#f1c654"/><path d="M8 4.7l9 3.5v37.2l-9-6.4z" fill="#fbe190"/><g transform="translate(0 35)"><rect x=".4" y=".4" width="12.2" height="12.2" fill="#fbfbfb" stroke="#c6c3c6" stroke-width=".8"/><path d="M3.9 2.1H10.1V8.2L8.3 6.6C6.5 7.8 5.6 9.5 5.5 11.6 3.3 10 2.3 7.6 3.3 5.6 3.8 4.6 4.6 3.9 5.4 3.5z" fill="#2a58a2"/></g></svg>
<span class="lbl" style="left:-22px;width:120px;top:665px;letter-spacing:-0.303px;padding-left:-0.303px">SystemApps</span>
<svg style="left:90px;top:613px" width="48" height="48" viewBox="0 0 48 48"><g transform="rotate(-4 24 30)"><path d="M2.5 13.5L41 1.5l2 6.5L4.5 20z" fill="#111"/><path d="M7 12l4.5 5.6 4.3-1.4-4.5-5.6zM16.5 9l4.5 5.6 4.3-1.4-4.5-5.6zM26 6l4.5 5.6 4.3-1.4-4.5-5.6zM35.5 3l4.5 5.6 2.5-.8-2.2-6.2z" fill="#fff"/><path d="M3.5 17.5h40.5v5.5H3.5z" fill="#111"/><path d="M7 17.5l4 5.5h4.5l-4-5.5zM17 17.5l4 5.5h4.5l-4-5.5zM27 17.5l4 5.5h4.5l-4-5.5zM37 17.5l4 5.5h3v-2l-2.5-3.5z" fill="#fff"/><rect x="4.5" y="22.5" width="40" height="22" rx="2.5" fill="#fcfcfc" stroke="#111" stroke-width="2"/><text x="7.5" y="41.5" font-size="21" font-weight="bold" fill="#e24a1a" font-family="Liberation Sans,sans-serif">3</text><text x="19" y="41.5" font-size="21" font-weight="bold" fill="#2f86e8" font-family="Liberation Sans,sans-serif">2</text><text x="30.5" y="41.5" font-size="21" font-weight="bold" fill="#3f9e28" font-family="Liberation Sans,sans-serif">1</text></g><g transform="translate(0 35)"><rect x=".4" y=".4" width="12.2" height="12.2" fill="#fbfbfb" stroke="#c6c3c6" stroke-width=".8"/><path d="M3.9 2.1H10.1V8.2L8.3 6.6C6.5 7.8 5.6 9.5 5.5 11.6 3.3 10 2.3 7.6 3.3 5.6 3.8 4.6 4.6 3.9 5.4 3.5z" fill="#2a58a2"/></g></svg>
<span class="lbl" style="left:54px;width:120px;top:665px;letter-spacing:-0.318px;padding-left:-0.318px">MPC-HC x64</span>
<svg style="left:166px;top:613px" width="48" height="48" viewBox="0 0 48 48"><path d="M1 14h9M1 20h7M1 26h6M1 32h4" stroke="#8c9692" stroke-width="1.5"/><path d="M17 10l30-1-5 26-33 1z" fill="#ece9d8" stroke="#1f3f98" stroke-width="1.5"/><path d="M17 10l30-1-1 5-30 1z" fill="#2a5cd8"/><path d="M40 10.5h2v2h-2zM43.5 10.3h2v2h-2z" fill="#f08a30"/><path d="M20 20l18-.5-1.5 8-18 .5z" fill="#fff" stroke="#555" stroke-width="1"/><path d="M22 21.5v5" stroke="#111" stroke-width="1.2"/><g transform="translate(0 35)"><rect x=".4" y=".4" width="12.2" height="12.2" fill="#fbfbfb" stroke="#c6c3c6" stroke-width=".8"/><path d="M3.9 2.1H10.1V8.2L8.3 6.6C6.5 7.8 5.6 9.5 5.5 11.6 3.3 10 2.3 7.6 3.3 5.6 3.8 4.6 4.6 3.9 5.4 3.5z" fill="#2a58a2"/></g></svg>
<span class="lbl" style="left:130px;width:120px;top:665px;letter-spacing:-0.263px;padding-left:-0.263px">autoruns</span>
<svg style="left:242px;top:613px" width="48" height="48" viewBox="0 0 48 48"><defs><linearGradient id="db" x1="0" y1="0" x2="1" y2="0"><stop offset="0" stop-color="#c6c8ca"/><stop offset=".35" stop-color="#f1f2f3"/><stop offset="1" stop-color="#9b9ea2"/></linearGradient></defs><path d="M7 8v32c0 4 8 7 17 7s17-3 17-7V8z" fill="url(#db)"/><ellipse cx="24" cy="8" rx="17" ry="6.5" fill="#dedfe0" stroke="#b4b6b8" stroke-width=".6"/><path d="M7 19c0 4 8 7 17 7s17-3 17-7M7 30c0 4 8 7 17 7s17-3 17-7" fill="none" stroke="#8f9296" stroke-width="1.3"/><path d="M13 38c5-10 14-20 27-26-2 8-8 14-14 17 3 0 5-1 7-2-4 6-11 9-20 11z" fill="#6c6f73" opacity=".8"/><g transform="translate(0 35)"><rect x=".4" y=".4" width="12.2" height="12.2" fill="#fbfbfb" stroke="#c6c3c6" stroke-width=".8"/><path d="M3.9 2.1H10.1V8.2L8.3 6.6C6.5 7.8 5.6 9.5 5.5 11.6 3.3 10 2.3 7.6 3.3 5.6 3.8 4.6 4.6 3.9 5.4 3.5z" fill="#2a58a2"/></g></svg>
<span class="lbl" style="left:206px;width:120px;top:665px;letter-spacing:-0.265px;padding-left:-0.265px">SQLiteStudio</span>
<svg style="left:318px;top:613px" width="48" height="48" viewBox="0 0 48 48"><path d="M10 22L22 4v36H8z" fill="#f4c95c"/><path d="M8 30h14v10H8z" fill="#e9d9a8"/><g transform="translate(0 35)"><rect x=".4" y=".4" width="12.2" height="12.2" fill="#fbfbfb" stroke="#c6c3c6" stroke-width=".8"/><path d="M3.9 2.1H10.1V8.2L8.3 6.6C6.5 7.8 5.6 9.5 5.5 11.6 3.3 10 2.3 7.6 3.3 5.6 3.8 4.6 4.6 3.9 5.4 3.5z" fill="#2a58a2"/></g></svg>
<span class="lbl" style="left:306px;text-align:left;top:665px;letter-spacing:-0.799px">URLOrganizer</span>
<svg style="left:14px;top:714px" width="48" height="48" viewBox="0 0 48 48"><path d="M3 9l17-2.5v16H3zM22 6.2L45 3v19.5H22zM3 25h17v16L3 38.5zM22 25h23v19.5L22 41.2z" fill="#00adef"/><g transform="translate(35.4 24.4) scale(1.13 .98) translate(-35.4 -24.4)"><path d="M35.4 24.4c3 2.5 6 3.5 9.5 3.5 0 9-2.5 14.5-9.5 18.5-7-4-9.5-9.5-9.5-18.5 3.5 0 6.5-1 9.5-3.5z" fill="#f0f4f8" stroke="#c8ced6" stroke-width=".6"/><path d="M35.4 26.4c2.3 1.8 4.8 2.7 7.5 2.8 0 3-.3 5.2-.8 7H35.4z" fill="#f4b320"/><path d="M35.4 26.4c-2.3 1.8-4.8 2.7-7.5 2.8 0 3 .3 5.2 .8 7H35.4z" fill="#2c6fd6"/><path d="M35.4 36.2h6.6c-1.2 3.5-3.3 6-6.6 8z" fill="#2c6fd6"/><path d="M35.4 36.2h-6.6c1.2 3.5 3.3 6 6.6 8z" fill="#f4b320"/></g><g transform="translate(0 35)"><rect x=".4" y=".4" width="12.2" height="12.2" fill="#fbfbfb" stroke="#c6c3c6" stroke-width=".8"/><path d="M3.9 2.1H10.1V8.2L8.3 6.6C6.5 7.8 5.6 9.5 5.5 11.6 3.3 10 2.3 7.6 3.3 5.6 3.8 4.6 4.6 3.9 5.4 3.5z" fill="#2a58a2"/></g></svg>
<span class="lbl" style="left:-22px;width:120px;top:766px;letter-spacing:-0.294px;padding-left:-0.294px">Windows 10</span>
<span class="lbl" style="left:-22px;width:120px;top:781px;letter-spacing:-0.243px;padding-left:-0.243px">Upgrade ...</span>
<svg style="left:90px;top:714px" width="48" height="48" viewBox="0 0 48 48"><defs><linearGradient id="il" x1="0" y1="0" x2="1" y2="1"><stop offset="0" stop-color="#e6eaf2"/><stop offset="1" stop-color="#7f8aa6"/></linearGradient><radialGradient id="ilb" cx=".4" cy=".35" r=".7"><stop offset="0" stop-color="#e8f4ff"/><stop offset=".6" stop-color="#69aaf0"/><stop offset="1" stop-color="#2a6fd0"/></radialGradient></defs><rect x="15" y="13" width="31" height="20" rx="1" fill="url(#il)"/><path d="M5 25l9 1" stroke="#b8c2d2" stroke-width="2"/><circle cx="5" cy="25" r="3.5" fill="#c5d0e2" stroke="#e8edf5"/><circle cx="19" cy="29" r="7.5" fill="url(#ilb)" stroke="#d5e4f6" stroke-width="1"/><g transform="translate(0 35)"><rect x=".4" y=".4" width="12.2" height="12.2" fill="#fbfbfb" stroke="#c6c3c6" stroke-width=".8"/><path d="M3.9 2.1H10.1V8.2L8.3 6.6C6.5 7.8 5.6 9.5 5.5 11.6 3.3 10 2.3 7.6 3.3 5.6 3.8 4.6 4.6 3.9 5.4 3.5z" fill="#2a58a2"/></g></svg>
<span class="lbl" style="left:54px;width:120px;top:766px;letter-spacing:-0.276px;padding-left:-0.276px">ILSpy</span>
<svg style="left:166px;top:714px" width="48" height="48" viewBox="0 0 48 48"><rect x="16" y="1" width="17" height="14" fill="#e8e8e8" stroke="#222" stroke-width="1.5"/><rect x="19" y="3.5" width="10" height="8" fill="#0a8a8a"/><rect x="18" y="15" width="14" height="6" fill="#d8d8d8" stroke="#222"/><rect x="3" y="27" width="15" height="12" fill="#e8e8e8" stroke="#222" stroke-width="1.5"/><rect x="5.5" y="29.5" width="9" height="7" fill="#0a18d8"/><rect x="14" y="39" width="6" height="8" fill="#222"/><circle cx="22" cy="26" r="8" fill="#18d8e8"/><path d="M18 21h8v10h-8zM18 24.5h8M18 27.5h8M22 21v10" stroke="#075a78" stroke-width=".9" fill="none"/><g transform="translate(35.4 24.4) scale(1.13 .98) translate(-35.4 -24.4)"><path d="M35.4 24.4c3 2.5 6 3.5 9.5 3.5 0 9-2.5 14.5-9.5 18.5-7-4-9.5-9.5-9.5-18.5 3.5 0 6.5-1 9.5-3.5z" fill="#f0f4f8" stroke="#c8ced6" stroke-width=".6"/><path d="M35.4 26.4c2.3 1.8 4.8 2.7 7.5 2.8 0 3-.3 5.2-.8 7H35.4z" fill="#f4b320"/><path d="M35.4 26.4c-2.3 1.8-4.8 2.7-7.5 2.8 0 3 .3 5.2 .8 7H35.4z" fill="#2c6fd6"/><path d="M35.4 36.2h6.6c-1.2 3.5-3.3 6-6.6 8z" fill="#2c6fd6"/><path d="M35.4 36.2h-6.6c1.2 3.5 3.3 6 6.6 8z" fill="#f4b320"/></g><g transform="translate(0 35)"><rect x=".4" y=".4" width="12.2" height="12.2" fill="#fbfbfb" stroke="#c6c3c6" stroke-width=".8"/><path d="M3.9 2.1H10.1V8.2L8.3 6.6C6.5 7.8 5.6 9.5 5.5 11.6 3.3 10 2.3 7.6 3.3 5.6 3.8 4.6 4.6 3.9 5.4 3.5z" fill="#2a58a2"/></g></svg>
<span class="lbl" style="left:130px;width:120px;top:766px;letter-spacing:-0.274px;padding-left:-0.274px">Tcpview</span>
<svg style="left:242px;top:714px" width="48" height="48" viewBox="0 0 48 48"><path d="M4 10l10-5 10 5v12l-10 5-10-5z" fill="#3fae3c"/><path d="M4 10l10 5 10-5-10-5z" fill="#7cd870"/><path d="M14 4l8-3 8 4-8 4z" fill="#a45ad0"/><path d="M26 7l10-5 10 5v10l-10 5-10-5z" fill="#e8c81c"/><path d="M26 7l10 5 10-5-10-5z" fill="#fbe65c"/><path d="M13 22l11-5 11 5v12l-11 5-11-5z" fill="#3a8fe0"/><path d="M13 22l11 5 11-5-11-5z" fill="#8cc4f8"/><path d="M2 28l10-4 11 5v13l-10 5-11-5z" fill="#c8281e"/><path d="M2 28l11 5 10-4-11-5z" fill="#f0645a"/><path d="M22 38l8 4v5l-8-2z" fill="#a81e18"/><g transform="translate(35.4 24.4) scale(1.13 .98) translate(-35.4 -24.4)"><path d="M35.4 24.4c3 2.5 6 3.5 9.5 3.5 0 9-2.5 14.5-9.5 18.5-7-4-9.5-9.5-9.5-18.5 3.5 0 6.5-1 9.5-3.5z" fill="#f0f4f8" stroke="#c8ced6" stroke-width=".6"/><path d="M35.4 26.4c2.3 1.8 4.8 2.7 7.5 2.8 0 3-.3 5.2-.8 7H35.4z" fill="#f4b320"/><path d="M35.4 26.4c-2.3 1.8-4.8 2.7-7.5 2.8 0 3 .3 5.2 .8 7H35.4z" fill="#2c6fd6"/><path d="M35.4 36.2h6.6c-1.2 3.5-3.3 6-6.6 8z" fill="#2c6fd6"/><path d="M35.4 36.2h-6.6c1.2 3.5 3.3 6 6.6 8z" fill="#f4b320"/></g><g transform="translate(0 35)"><rect x=".4" y=".4" width="12.2" height="12.2" fill="#fbfbfb" stroke="#c6c3c6" stroke-width=".8"/><path d="M3.9 2.1H10.1V8.2L8.3 6.6C6.5 7.8 5.6 9.5 5.5 11.6 3.3 10 2.3 7.6 3.3 5.6 3.8 4.6 4.6 3.9 5.4 3.5z" fill="#2a58a2"/></g></svg>
<span class="lbl" style="left:206px;width:120px;top:766px;letter-spacing:-0.252px;padding-left:-0.252px">Defraggler</span>
<svg style="left:318px;top:714px" width="48" height="48" viewBox="0 0 48 48"><path d="M6 6h16v40H6z" fill="#eceff2" stroke="#c6ccd2"/><path d="M10 13l3 3 5-6M10 22l3 3 5-6M10 31l3 3 5-6" stroke="#4aa0e8" stroke-width="1.8" fill="none"/><g transform="translate(0 35)"><rect x=".4" y=".4" width="12.2" height="12.2" fill="#fbfbfb" stroke="#c6c3c6" stroke-width=".8"/><path d="M3.9 2.1H10.1V8.2L8.3 6.6C6.5 7.8 5.6 9.5 5.5 11.6 3.3 10 2.3 7.6 3.3 5.6 3.8 4.6 4.6 3.9 5.4 3.5z" fill="#2a58a2"/></g></svg>
<span class="lbl" style="left:335px;text-align:left;top:766px;letter-spacing:0.000px">fciv</span>
<svg style="left:14px;top:815px" width="48" height="48" viewBox="0 0 48 48"><defs><radialGradient id="ff" cx=".7" cy=".15" r="1"><stop offset="0" stop-color="#fff36a"/><stop offset=".3" stop-color="#ffbd2e"/><stop offset=".6" stop-color="#ff6a2a"/><stop offset="1" stop-color="#e31587"/></radialGradient><radialGradient id="ffp" cx=".5" cy=".4" r=".6"><stop offset="0" stop-color="#9059ff"/><stop offset="1" stop-color="#5b2ed0"/></radialGradient></defs><path d="M28 1c4 4 6 8 6 12 5 2 10 8 12 14 1 12-8 20-21 20C11 47 1 38 2 24c.5-6 3-11 6-14 0 3 1 5 2 6 2-4 6-6 10-7-1-3 3-6 8-8z" fill="url(#ff)"/><circle cx="24" cy="26" r="10" fill="url(#ffp)"/><path d="M9 16c5-2 10-1 13 3 4 0 8 2 9 5-4-2-8 0-9 3-1 4 3 7 8 6-4 5-13 5-18-1-4-5-5-11-3-16z" fill="#ff7a2c" opacity=".92"/><g transform="translate(0 35)"><rect x=".4" y=".4" width="12.2" height="12.2" fill="#fbfbfb" stroke="#c6c3c6" stroke-width=".8"/><path d="M3.9 2.1H10.1V8.2L8.3 6.6C6.5 7.8 5.6 9.5 5.5 11.6 3.3 10 2.3 7.6 3.3 5.6 3.8 4.6 4.6 3.9 5.4 3.5z" fill="#2a58a2"/></g></svg>
<span class="lbl" style="left:-22px;width:120px;top:867px;letter-spacing:-0.236px;padding-left:-0.236px">Firefox</span>
<svg style="left:90px;top:815px" width="48" height="48" viewBox="0 0 48 48"><rect x="0" y="0" width="48" height="48" fill="#6f6e8e" stroke="#dcdce8" stroke-width="1.5"/><path d="M9 14c0-4 3-6 7-6h16c3 0 5 2 5 5v18c0 3-2 5-5 5H13c-3 0-5-2-5-5z" fill="#fff"/><path d="M37 17l6-3v16l-6-3z" fill="#fff"/><path d="M11 8l8-3v6z" fill="#fff"/><path d="M8 41h26l2 2" stroke="#fff" stroke-width="2" fill="none"/><g transform="translate(0 35)"><rect x=".4" y=".4" width="12.2" height="12.2" fill="#fbfbfb" stroke="#c6c3c6" stroke-width=".8"/><path d="M3.9 2.1H10.1V8.2L8.3 6.6C6.5 7.8 5.6 9.5 5.5 11.6 3.3 10 2.3 7.6 3.3 5.6 3.8 4.6 4.6 3.9 5.4 3.5z" fill="#2a58a2"/></g></svg>
<span class="lbl" style="left:54px;width:120px;top:867px;letter-spacing:-0.278px;padding-left:-0.278px">Recorder</span>
<svg style="left:166px;top:815px" width="48" height="48" viewBox="0 0 48 48"><path d="M1 14h8M1 19h6M1 24h5" stroke="#9aa4a0" stroke-width="1.3"/><path d="M16 5c5-3 10-3 14 1l-4 14c-4-3-9-3-14 0z" fill="#e8581e"/><path d="M31 8c5 3 10 3 16-1l-5 15c-5 3-10 3-15 0z" fill="#7ab82e"/><path d="M11 23c5-3 10-3 14 0l-4 14c-4-3-9-3-14 0z" fill="#2f7de0" opacity=".9"/><path d="M26 25c5 3 10 3 15 0l-4 15c-5 3-10 3-15 0z" fill="#f6c81e"/><path d="M8 11l22-1-3 15-22 1z" fill="#ece9d8" stroke="#1f3f98" stroke-width="1.2"/><path d="M8 11l22-1-.8 4-22 1z" fill="#2a5cd8"/><path d="M11 18l13-.5-1 5-13 .5z" fill="#fff" stroke="#555" stroke-width=".8"/><g transform="translate(0 35)"><rect x=".4" y=".4" width="12.2" height="12.2" fill="#fbfbfb" stroke="#c6c3c6" stroke-width=".8"/><path d="M3.9 2.1H10.1V8.2L8.3 6.6C6.5 7.8 5.6 9.5 5.5 11.6 3.3 10 2.3 7.6 3.3 5.6 3.8 4.6 4.6 3.9 5.4 3.5z" fill="#2a58a2"/></g></svg>
<span class="lbl" style="left:130px;width:120px;top:867px;letter-spacing:-0.309px;padding-left:-0.309px">Procmon</span>
<svg style="left:242px;top:815px" width="48" height="48" viewBox="0 0 48 48"><rect x="0" y="6" width="48" height="36" fill="#fff"/><text x="0" y="34" font-size="27" font-weight="bold" fill="#49a85a" font-family="Liberation Sans,sans-serif">H</text><text x="13" y="34" font-size="24" font-weight="bold" fill="#111" font-family="Liberation Sans,sans-serif">x</text><text x="27" y="35" font-size="28" font-weight="bold" fill="#f0a030" opacity=".9" font-family="Liberation Sans,sans-serif">D</text><circle cx="35" cy="25" r="7" fill="#d8dce0" opacity=".55"/><g transform="translate(0 35)"><rect x=".4" y=".4" width="12.2" height="12.2" fill="#fbfbfb" stroke="#c6c3c6" stroke-width=".8"/><path d="M3.9 2.1H10.1V8.2L8.3 6.6C6.5 7.8 5.6 9.5 5.5 11.6 3.3 10 2.3 7.6 3.3 5.6 3.8 4.6 4.6 3.9 5.4 3.5z" fill="#2a58a2"/></g></svg>
<span class="lbl" style="left:206px;width:120px;top:867px;letter-spacing:-0.350px;padding-left:-0.350px">HxD</span>
<svg style="left:318px;top:815px" width="48" height="48" viewBox="0 0 48 48"><rect x="1" y="2" width="30" height="42" fill="#3c3c3c" stroke="#dcdcdc" stroke-width="2"/><path d="M6 11h18" stroke="#e8e8e8" stroke-width="1.5"/><text x="9" y="34" font-size="22" font-weight="bold" fill="#e8e8e8" font-family="Liberation Sans,sans-serif">C</text><g transform="translate(0 35)"><rect x=".4" y=".4" width="12.2" height="12.2" fill="#fbfbfb" stroke="#c6c3c6" stroke-width=".8"/><path d="M3.9 2.1H10.1V8.2L8.3 6.6C6.5 7.8 5.6 9.5 5.5 11.6 3.3 10 2.3 7.6 3.3 5.6 3.8 4.6 4.6 3.9 5.4 3.5z" fill="#2a58a2"/></g></svg>
<span class="lbl" style="left:306px;text-align:left;top:867px;letter-spacing:-0.254px">WcfTestClient</span>
<svg style="left:14px;top:916px" width="48" height="48" viewBox="0 0 48 48"><g transform="translate(0 -.5)"><circle cx="24" cy="24" r="22" fill="#de5246"/><path d="M15.34 29L5.54 12.03A22 22 0 0 1 43.6 14L24 14Z" fill="#de5246"/><path d="M24 14L43.6 14A22 22 0 0 1 22.86 45.97L32.66 29Z" fill="#ffce44"/><path d="M32.66 29L22.86 45.97A22 22 0 0 1 5.54 12.03L15.34 29Z" fill="#1da362"/><path d="M24 14L15.34 29L32.66 29Z" fill="#fff"/><circle cx="24" cy="24" r="10" fill="#f6f6f6"/><circle cx="24" cy="24" r="8" fill="#4c8bf5"/></g><g transform="translate(0 35)"><rect x=".4" y=".4" width="12.2" height="12.2" fill="#fbfbfb" stroke="#c6c3c6" stroke-width=".8"/><path d="M3.9 2.1H10.1V8.2L8.3 6.6C6.5 7.8 5.6 9.5 5.5 11.6 3.3 10 2.3 7.6 3.3 5.6 3.8 4.6 4.6 3.9 5.4 3.5z" fill="#2a58a2"/></g></svg>
<span class="lbl" style="left:-22px;width:120px;top:968px;letter-spacing:-0.290px;padding-left:-0.290px">Google</span>
<span class="lbl" style="left:-22px;width:120px;top:983px;letter-spacing:-0.320px;padding-left:-0.320px">Chrome</span>
<svg style="left:90px;top:916px" width="48" height="48" viewBox="0 0 48 48"><defs><linearGradient id="ws" x1="0" y1="0" x2="1" y2="1"><stop offset="0" stop-color="#5aa8ff"/><stop offset=".5" stop-color="#1a5fd8"/><stop offset="1" stop-color="#0c2f9a"/></linearGradient></defs><path d="M3 42C8 20 24 4 45 1c-6 10-7 24-3 41z" fill="url(#ws)"/><path d="M3 42c5-3 12 1 18-1s14 1 21 0v4H3z" fill="#7fa8dc" opacity=".85"/><path d="M12 30C17 17 27 8 40 4 28 10 20 19 15 32z" fill="#a8d0ff" opacity=".5"/><g transform="translate(0 35)"><rect x=".4" y=".4" width="12.2" height="12.2" fill="#fbfbfb" stroke="#c6c3c6" stroke-width=".8"/><path d="M3.9 2.1H10.1V8.2L8.3 6.6C6.5 7.8 5.6 9.5 5.5 11.6 3.3 10 2.3 7.6 3.3 5.6 3.8 4.6 4.6 3.9 5.4 3.5z" fill="#2a58a2"/></g></svg>
<span class="lbl" style="left:54px;width:120px;top:968px;letter-spacing:-0.270px;padding-left:-0.270px">Wireshark</span>
<svg style="left:166px;top:916px" width="48" height="48" viewBox="0 0 48 48"><path d="M3 5h22l7 7v32H3z" fill="#fdfdfd" stroke="#b9bfc4" stroke-width=".8"/><path d="M5 5v-2M8 5v-2M11 5v-2M14 5v-2M17 5v-2M20 5v-2M23 5v-2" stroke="#555" stroke-width="1"/><rect x="4" y="14" width="27" height="28" fill="#8edc3c"/><path d="M7 22c2-6 8-9 14-7 4 1 6 4 6 7-2 2-5 2-7 1l-2 5h-5l1-4c-3 1-6 0-7-2z" fill="#5cb81e" stroke="#2f6a10" stroke-width=".8"/><circle cx="20" cy="15.5" r="3.5" fill="#fff" stroke="#333" stroke-width=".8"/><circle cx="20.5" cy="15.5" r="1.2" fill="#111"/><path d="M6 27h22M17 33v8M21 35v6" stroke="#2f4a1a" stroke-width="1.2"/><path d="M44 3l3 2-12 32-4 3 1-5z" fill="#f3b52a" stroke="#8a5a0a" stroke-width=".6"/><path d="M44 3l3 2-1 2.5-3-2z" fill="#c8321e"/><g transform="translate(0 35)"><rect x=".4" y=".4" width="12.2" height="12.2" fill="#fbfbfb" stroke="#c6c3c6" stroke-width=".8"/><path d="M3.9 2.1H10.1V8.2L8.3 6.6C6.5 7.8 5.6 9.5 5.5 11.6 3.3 10 2.3 7.6 3.3 5.6 3.8 4.6 4.6 3.9 5.4 3.5z" fill="#2a58a2"/></g></svg>
<span class="lbl" style="left:130px;width:120px;top:968px;letter-spacing:-0.297px;padding-left:-0.297px">Notepad++</span>
<svg style="left:242px;top:916px" width="48" height="48" viewBox="0 0 48 48"><path d="M11 .5l36.5 21.2M.5 21l41.5 25.5" stroke="#12cc1c" stroke-width="3"/><path d="M11.5 -.8l36.5 21.2M1 19.7l41.5 25.5" stroke="#0a7a10" stroke-width=".7"/><g font-weight="bold" font-family="Liberation Sans,sans-serif" font-size="17" fill="#fcc70c" stroke="#7a5406" stroke-width="1.3" paint-order="stroke" stroke-linejoin="round"><text x="2.5" y="18">T</text><text x="13" y="24.5">F</text><text x="22.5" y="31.5">T</text><text x="33.5" y="38.5">P</text></g><g transform="translate(0 35)"><rect x=".4" y=".4" width="12.2" height="12.2" fill="#fbfbfb" stroke="#c6c3c6" stroke-width=".8"/><path d="M3.9 2.1H10.1V8.2L8.3 6.6C6.5 7.8 5.6 9.5 5.5 11.6 3.3 10 2.3 7.6 3.3 5.6 3.8 4.6 4.6 3.9 5.4 3.5z" fill="#2a58a2"/></g></svg>
<span class="lbl" style="left:206px;width:120px;top:968px;letter-spacing:-0.262px;padding-left:-0.262px">Tftpd64</span>
<svg style="left:318px;top:916px" width="48" height="48" viewBox="0 0 48 48"><path d="M0 24L24 0l24 24-24 24z" fill="#2fae3c"/><g transform="translate(0 35)"><rect x=".4" y=".4" width="12.2" height="12.2" fill="#fbfbfb" stroke="#c6c3c6" stroke-width=".8"/><path d="M3.9 2.1H10.1V8.2L8.3 6.6C6.5 7.8 5.6 9.5 5.5 11.6 3.3 10 2.3 7.6 3.3 5.6 3.8 4.6 4.6 3.9 5.4 3.5z" fill="#2a58a2"/></g></svg>
<svg style="left:1838px;top:7px" width="48" height="48" viewBox="0 0 48 48"><rect x="0" y="0" width="48" height="48" fill="#0078d7"/><path d="M7.3 15.3L27.4 8v7L16 18.2V31l-8.3 3z" fill="#00adef"/><path d="M28.5 8l12 3.7v26.6l-12 2.2z" fill="#00b4f2"/><path d="M27.4 8l1.1 0v32.5l-1.1-.3z" fill="#0a5fae" opacity=".5"/><path d="M38.5 22l-1.5 6 1.5-.3zM39 29.5l-3.5 1-.8 2 4.3-1.2zM39 34l-5.5 1.5-.8 2 6.3-1.7z" fill="#e8f8ff"/><g transform="translate(0 35)"><rect x=".4" y=".4" width="12.2" height="12.2" fill="#fbfbfb" stroke="#c6c3c6" stroke-width=".8"/><path d="M3.9 2.1H10.1V8.2L8.3 6.6C6.5 7.8 5.6 9.5 5.5 11.6 3.3 10 2.3 7.6 3.3 5.6 3.8 4.6 4.6 3.9 5.4 3.5z" fill="#2a58a2"/></g></svg>
<span class="lbl" style="left:1802px;width:120px;top:59px;letter-spacing:-0.252px;padding-left:-0.252px">3D Builder</span>
<svg style="left:1838px;top:108px" width="48" height="48" viewBox="0 0 48 48"><defs><linearGradient id="p3" x1="0" y1="0" x2="1" y2="1"><stop offset="0" stop-color="#f6c81e"/><stop offset=".3" stop-color="#f0508c"/><stop offset=".6" stop-color="#9a5ad8"/><stop offset="1" stop-color="#28b4f0"/></linearGradient></defs><rect x="0" y="0" width="48" height="48" fill="#0078d7"/><path d="M25 6c8 9 13 16 12 24-1 7-6 11-13 11-8 0-13-5-13-12 0-9 8-15 14-23z" fill="url(#p3)"/><path d="M12 26c5 5 16 8 25 3-1 8-6 12-13 12-8 0-13-6-12-15z" fill="#28b4f0" opacity=".8"/><path d="M25 6c3 3 5 6 6 8-4-1-7 0-9 2 1-4 2-7 3-10z" fill="#f8d21e"/><g transform="translate(0 35)"><rect x=".4" y=".4" width="12.2" height="12.2" fill="#fbfbfb" stroke="#c6c3c6" stroke-width=".8"/><path d="M3.9 2.1H10.1V8.2L8.3 6.6C6.5 7.8 5.6 9.5 5.5 11.6 3.3 10 2.3 7.6 3.3 5.6 3.8 4.6 4.6 3.9 5.4 3.5z" fill="#2a58a2"/></g></svg>
<span class="lbl" style="left:1802px;width:120px;top:160px;letter-spacing:-0.259px;padding-left:-0.259px">Paint 3D</span>
<svg style="left:1838px;top:209px" width="48" height="48" viewBox="0 0 48 48"><rect x="0" y="0" width="48" height="48" fill="#0078d7"/><path d="M24 7l15 8v17l-15 9-15-9V15zM9 15l15 9 15-9M24 24v17" fill="none" stroke="#fff" stroke-width="3" stroke-linejoin="round"/><g transform="translate(0 35)"><rect x=".4" y=".4" width="12.2" height="12.2" fill="#fbfbfb" stroke="#c6c3c6" stroke-width=".8"/><path d="M3.9 2.1H10.1V8.2L8.3 6.6C6.5 7.8 5.6 9.5 5.5 11.6 3.3 10 2.3 7.6 3.3 5.6 3.8 4.6 4.6 3.9 5.4 3.5z" fill="#2a58a2"/></g></svg>
<span class="lbl" style="left:1802px;width:120px;top:261px;letter-spacing:-0.286px;padding-left:-0.286px">View 3D</span>
<svg style="left:1838px;top:310px" width="48" height="48" viewBox="0 0 48 48"><defs><linearGradient id="rv" x1="0" y1="0" x2="1" y2="1"><stop offset="0" stop-color="#5050b0"/><stop offset=".5" stop-color="#2a2a78"/><stop offset="1" stop-color="#3a3a90"/></linearGradient></defs><ellipse cx="23.5" cy="38" rx="9" ry="3.2" fill="#d5d9dd" stroke="#a5abb2" stroke-width=".6"/><path d="M19 32h9l1 5h-11z" fill="#bfc4ca"/><path d="M5 4.5l38.8 .5-1.5 28.5L7.5 33z" fill="#e4e7ea" stroke="#a9afb6" stroke-width=".8"/><path d="M8 7.5l32.5 .5-1.2 22.5-29.8-.4z" fill="url(#rv)"/><path d="M8 7.5l32.5 .5-.6 11C30 18 18 22 9 27z" fill="#7070c8" opacity=".35"/><g transform="translate(0 35)"><rect x=".4" y=".4" width="12.2" height="12.2" fill="#fbfbfb" stroke="#c6c3c6" stroke-width=".8"/><path d="M3.9 2.1H10.1V8.2L8.3 6.6C6.5 7.8 5.6 9.5 5.5 11.6 3.3 10 2.3 7.6 3.3 5.6 3.8 4.6 4.6 3.9 5.4 3.5z" fill="#2a58a2"/></g></svg>
<span class="lbl" style="left:1802px;width:120px;top:362px;letter-spacing:-0.315px;padding-left:-0.315px">Remote</span>
<span class="lbl" style="left:1802px;width:120px;top:377px;letter-spacing:-0.260px;padding-left:-0.260px">viewer</span>
<svg style="left:1838px;top:411px" width="48" height="48" viewBox="0 0 48 48"><path fill-rule="evenodd" d="M4.7 28.5a18 11.5 0 1 0 36 0a18 11.5 0 1 0 -36 0zM10.5 29a13.8 8.2 0 1 1 27.6 0a13.8 8.2 0 1 1 -27.6 0z" fill="#f6a313" transform="rotate(-6 23 28)"/><circle cx="24" cy="28.3" r="7.6" fill="#d42a1e"/><path d="M24 28.3c0-1.8 2.8-1.8 2.8 .6 0 3-4.8 3.4-5.4-.5-.6-4 5.8-5.3 7.8-.6 1.5 4.5-3 7.5-7 6.5" fill="none" stroke="#54403a" stroke-width="1.1" opacity=".75"/><path d="M31 38.5l7-5M33.5 39.5l6.5-3.5" stroke="#f6a313" stroke-width="1.2"/><path d="M-2.8 -1.5l3-1.5 2.8 1.2-.6 3.6-3.2 .8-2.2-1.8z" fill="#f6a313" transform="translate(5.5 15.5) rotate(-30)"/><path d="M-2.8 -1.5l3-1.5 2.8 1.2-.6 3.6-3.2 .8-2.2-1.8z" fill="#f6a313" transform="translate(16.5 10.5) rotate(-10)"/><path d="M-2.8 -1.5l3-1.5 2.8 1.2-.6 3.6-3.2 .8-2.2-1.8z" fill="#f6a313" transform="translate(42 21) rotate(60)"/><path d="M26 3l7.5 .5-2.3 2.5 5.3 5 2.5-2.3 .5 7.5-7.5-.5 2.3-2.5-5.3-5-2.5 2.3z" fill="#3a9be8" stroke="#d8ecfb" stroke-width=".9"/><path d="M38 15l5 2-1.5 3.5-4.5-2.5z" fill="#3a9be8" stroke="#d8ecfb" stroke-width=".7"/><g transform="translate(0 35)"><rect x=".4" y=".4" width="12.2" height="12.2" fill="#fbfbfb" stroke="#c6c3c6" stroke-width=".8"/><path d="M3.9 2.1H10.1V8.2L8.3 6.6C6.5 7.8 5.6 9.5 5.5 11.6 3.3 10 2.3 7.6 3.3 5.6 3.8 4.6 4.6 3.9 5.4 3.5z" fill="#2a58a2"/></g></svg>
<span class="lbl" style="left:1802px;width:120px;top:463px;letter-spacing:-0.310px;padding-left:-0.310px">MobaXterm</span>
<svg style="left:1838px;top:512px" width="48" height="48" viewBox="0 0 48 48"><defs><linearGradient id="xmg" x1="0" y1="0" x2="1" y2="0"><stop offset="0" stop-color="#e8441a"/><stop offset=".3" stop-color="#f07a22"/><stop offset="1" stop-color="#f8c23c"/></linearGradient></defs><path fill-rule="evenodd" transform="rotate(-7 23.5 27.2)" d="M-.1 27.2a23.6 15.6 0 1 0 47.2 0a23.6 15.6 0 1 0 -47.2 0zM7.1 27a19.4 14.2 0 1 1 38.8 0a19.4 14.2 0 1 1 -38.8 0z" fill="url(#xmg)"/><path d="M39.3 0h3.5L7 48H3z" fill="#fff"/><path d="M42.8 0h2.4L9.5 48H7z" fill="#000"/><path d="M-1 -.8h12L45 47.2l-1 .8H33.3z" fill="#fff"/><path d="M.3 0h10.9L45 48H34.5z" fill="#000"/><g transform="translate(0 35)"><rect x=".4" y=".4" width="12.2" height="12.2" fill="#fbfbfb" stroke="#c6c3c6" stroke-width=".8"/><path d="M3.9 2.1H10.1V8.2L8.3 6.6C6.5 7.8 5.6 9.5 5.5 11.6 3.3 10 2.3 7.6 3.3 5.6 3.8 4.6 4.6 3.9 5.4 3.5z" fill="#2a58a2"/></g></svg>
<span class="lbl" style="left:1802px;width:120px;top:564px;letter-spacing:-0.306px;padding-left:-0.306px">Xming</span>
<svg style="left:1838px;top:613px" width="48" height="48" viewBox="0 0 48 48"><defs><linearGradient id="xmg" x1="0" y1="0" x2="1" y2="0"><stop offset="0" stop-color="#e8441a"/><stop offset=".3" stop-color="#f07a22"/><stop offset="1" stop-color="#f8c23c"/></linearGradient></defs><path fill-rule="evenodd" transform="rotate(-7 23.5 27.2)" d="M-.1 27.2a23.6 15.6 0 1 0 47.2 0a23.6 15.6 0 1 0 -47.2 0zM7.1 27a19.4 14.2 0 1 1 38.8 0a19.4 14.2 0 1 1 -38.8 0z" fill="url(#xmg)"/><path d="M39.3 0h3.5L7 48H3z" fill="#fff"/><path d="M42.8 0h2.4L9.5 48H7z" fill="#000"/><path d="M-1 -.8h12L45 47.2l-1 .8H33.3z" fill="#fff"/><path d="M.3 0h10.9L45 48H34.5z" fill="#000"/><g transform="translate(0 35)"><rect x=".4" y=".4" width="12.2" height="12.2" fill="#fbfbfb" stroke="#c6c3c6" stroke-width=".8"/><path d="M3.9 2.1H10.1V8.2L8.3 6.6C6.5 7.8 5.6 9.5 5.5 11.6 3.3 10 2.3 7.6 3.3 5.6 3.8 4.6 4.6 3.9 5.4 3.5z" fill="#2a58a2"/></g></svg>
<span class="lbl" style="left:1802px;width:120px;top:665px;letter-spacing:-0.305px;padding-left:-0.305px">XLaunch</span>
<div id="win" style="left:339px;top:54px;width:1424px;height:912px;background:#f7f7f7;box-shadow:0 0 0 1px rgba(40,45,45,.8),0 5px 20px 2px rgba(0,0,0,.40),0 1px 8px 1px rgba(0,0,0,.28)"></div>
<div style="left:339px;top:54px;width:1424px;height:30px;background:#ffffff;"></div>
<svg style="left:347px;top:60px" width="16.0" height="16.0" viewBox="0 0 16 16"><circle cx="5.5" cy="6" r="4.8" fill="url(#gg)" stroke="#123a8c" stroke-width=".5"/><path d="M1.66 4.56q1.44 -2.88 3.84 -2.64q-0.24 2.16 -1.44 2.64q-0.48 2.40 -1.68 1.44z" fill="#3fc22e"/><path d="M3.82 7.44q2.16 -0.96 3.36 0.48q-0.48 2.16 -2.16 2.40q-1.20 -0.96 -1.20 -2.88z" fill="#2fa824"/><path d="M8.14 3.36q1.68 1.44 1.82 3.84q-1.44 -0.48 -1.82 -3.84z" fill="#4cc238"/><ellipse cx="4.54" cy="3.84" rx="1.92" ry="1.20" fill="#fff" opacity=".35"/><path d="M1 1.5l5 .3-1.6 1.4 2.2 2.2-1.3 1.2-2.2-2.2L1.6 6z" fill="#f4b223" stroke="#b97a08" stroke-width=".4"/><rect x="8.5" y="5.5" width="6" height="10" fill="#c9ced4" stroke="#5d6670" stroke-width=".8"/><path d="M9.8 7.5h3.4M9.8 9.5h3.4M9.8 11.5h3.4" stroke="#6b747e" stroke-width=".8"/><rect x="12" y="13" width="1.5" height="1.5" fill="#4fe02a"/></svg>
<span class="t" style="left:368px;top:61px;line-height:16px;font-size:12px;letter-spacing:-0.119px;">Internet Information Services (IIS) Manager</span>
<svg style="left:1640px;top:58px" width="120" height="22" viewBox="0 0 120 22"><g stroke="#000" stroke-width="1" fill="none" shape-rendering="crispEdges"><path d="M4 10.5h10"/><rect x="49.5" y="5.5" width="9" height="9"/></g><path d="M95 5l10 10M105 5l-10 10" stroke="#000" stroke-width="1.1" fill="none"/></svg>
<div style="left:339px;top:84px;width:1424px;height:33px;background:#b9d1ea;border-bottom:1px solid #a9c3df"></div>
<svg style="left:342px;top:85px" width="60" height="30" viewBox="0 0 60 30"><defs><linearGradient id="pg" x1="0" y1="0" x2="0" y2="1"><stop offset="0" stop-color="#c0d2e6"/><stop offset=".45" stop-color="#a9bed7"/><stop offset="1" stop-color="#bfd3e9"/></linearGradient></defs><path d="M12 1.5 C21 -.5 23 4 28.5 4 C34 4 36 -.5 45 1.5 C52 3 55 8 55 14.5 C55 21 52 26 45 27.5 C36 29.5 34 25 28.5 25 C23 25 21 29.5 12 27.5 C5 26 1.5 21 1.5 14.5 C1.5 8 5 3 12 1.5Z" fill="url(#pg)" stroke="#c9daec" stroke-width="1.2"/><g stroke="#7d838b" stroke-width="1.7" fill="none"><path d="M19.5 14.5H8M12.5 9.5l-5 5 5 5"/><path d="M40 14.5h11.5M47 9.5l5 5-5 5" stroke="#949ca7"/></g></svg>
<div style="left:417px;top:88px;width:1230px;height:23px;background:#e9f0f9;border:1px solid #a3b7cf"></div>
<svg style="left:423px;top:91px" width="16" height="16" viewBox="0 0 16 16"><circle cx="7" cy="7" r="6.5" fill="url(#gg)" stroke="#123a8c" stroke-width=".5"/><path d="M1.80 5.05q1.95 -3.90 5.20 -3.58q-0.33 2.93 -1.95 3.58q-0.65 3.25 -2.27 1.95z" fill="#3fc22e"/><path d="M4.72 8.95q2.93 -1.30 4.55 0.65q-0.65 2.93 -2.93 3.25q-1.62 -1.30 -1.62 -3.90z" fill="#2fa824"/><path d="M10.57 3.42q2.27 1.95 2.47 5.20q-1.95 -0.65 -2.47 -5.20z" fill="#4cc238"/><ellipse cx="5.70" cy="4.07" rx="2.60" ry="1.62" fill="#fff" opacity=".35"/><circle cx="11.5" cy="11.8" r="4" fill="url(#hq)" stroke="#e8eefc" stroke-width=".9"/><text x="11.5" y="14.4" font-size="6.8" font-weight="bold" fill="#fff" text-anchor="middle" font-family="Liberation Sans,sans-serif">?</text></svg>
<svg style="left:444px;top:94px" width="8" height="10" viewBox="0 0 8 10"><path d="M2.5 1.5l3.8 3.5-3.8 3.5z" fill="#000"/></svg>
<span class="t" style="left:462px;top:91px;line-height:16px;font-size:12px;letter-spacing:-0.877px;">DESKTOP-LSPOOHK</span>
<svg style="left:577px;top:94px" width="8" height="10" viewBox="0 0 8 10"><path d="M2.5 1.5l3.8 3.5-3.8 3.5z" fill="#000"/></svg>
<span class="t" style="left:595px;top:91px;line-height:16px;font-size:12px;letter-spacing:-0.536px;">Sites</span>
<svg style="left:629px;top:94px" width="8" height="10" viewBox="0 0 8 10"><path d="M2.5 1.5l3.8 3.5-3.8 3.5z" fill="#000"/></svg>
<span class="t" style="left:646px;top:91px;line-height:16px;font-size:12px;letter-spacing:-0.177px;">Default Web Site</span>
<svg style="left:742px;top:94px" width="8" height="10" viewBox="0 0 8 10"><path d="M2.5 1.5l3.8 3.5-3.8 3.5z" fill="#000"/></svg>
<svg style="left:1654px;top:89px" width="16" height="16" viewBox="0 0 16 16"><rect x=".5" y=".5" width="15" height="15" rx="1.5" fill="url(#grn)" stroke="#8fd28a" stroke-width="1"/><path d="M2.5 7.5l3-4.5 .8 2.2c1.6-.6 3 .1 3.6 1.2-1.2-.5-2.2-.3-3 .3l.9 2z" fill="#fff"/><path d="M13.5 8.5l-3 4.5-.8-2.2c-1.6 .6-3-.1-3.6-1.2 1.2 .5 2.2 .3 3-.3l-.9-2z" fill="#fff"/></svg>
<svg style="left:1677px;top:89px" width="16" height="16" viewBox="0 0 16 16"><rect x=".5" y=".5" width="15" height="15" rx="1.5" fill="#c3cbd4" stroke="#b0bac6" stroke-width="1"/><path d="M3.5 4l9 8M12.5 4l-9 8" stroke="#a3acb6" stroke-width="2" stroke-linecap="round"/></svg>
<svg style="left:1700px;top:89px" width="16" height="16" viewBox="0 0 16 16"><path d="M2.5 8v7h11V8L8 2.5z" fill="#f1f3f6" stroke="#8a97a8" stroke-width=".8"/><path d="M.8 8.2L8 1l7.2 7.2" fill="none" stroke="#2f5fd0" stroke-width="1.5"/><rect x="2.2" y="1" width="2" height="3.5" fill="#2a3fc8"/><rect x="9" y="9" width="2.2" height="6" fill="#2d62c4"/><rect x="4.2" y="9" width="2.2" height="2.2" fill="#4a5563"/></svg>
<div style="left:1724px;top:90px;width:1px;height:16px;background:#e4edf7;"></div>
<svg style="left:1728px;top:89px" width="16" height="16" viewBox="0 0 16 16"><circle cx="8" cy="8" r="7.4" fill="#d8dde8" stroke="#8c93a0" stroke-width=".8"/><circle cx="8" cy="8" r="6" fill="url(#hq)"/><text x="8" y="12" font-size="11" font-weight="bold" fill="#fff" text-anchor="middle" font-family="Liberation Sans,sans-serif">?</text></svg>
<svg style="left:1749px;top:95px" width="8" height="5" viewBox="0 0 8 5"><path d="M1 .5h6L4 4z" fill="#000"/></svg>
<div style="left:339px;top:117px;width:1424px;height:26px;background:linear-gradient(#ffffff 0%,#fbfbfb 35%,#ededed 80%,#e4e4e4 100%);"></div>
<div style="left:339px;top:141px;width:1424px;height:1px;background:#fdfdfd;"></div>
<span class="t" style="left:354px;top:121px;line-height:16px;font-size:12px;letter-spacing:-0.334px;">File</span>
<span class="t" style="left:391px;top:121px;line-height:16px;font-size:12px;letter-spacing:-0.199px;">View</span>
<span class="t" style="left:435px;top:121px;line-height:16px;font-size:12px;letter-spacing:0.080px;">Help</span>
<div style="left:340px;top:142px;width:321px;height:800px;background:#ffffff;border:1px solid #919391"></div>
<div style="left:341px;top:143px;width:319px;height:23px;background:#bebcbe;"></div>
<span class="t" style="left:348px;top:147px;line-height:16px;font-size:12px;font-weight:bold;letter-spacing:-0.425px;">Connections</span>
<div style="left:341px;top:166px;width:319px;height:24px;background:linear-gradient(#fbfbfb,#e6e4e6);"></div>
<div style="left:341px;top:190px;width:319px;height:1px;background:#4a4a78;"></div>
<svg style="left:344px;top:170px" width="16" height="16" viewBox="0 0 16 16"><path d="M.4 3.3h5.5l1.3 1.5H14v10.2H.4z" fill="#f6d47c" stroke="#c69a3e" stroke-width=".8"/><path d="M1 6h12.4v8.4H1z" fill="url(#fy)"/><rect x="9.5" y="2.8" width="2.6" height="1.2" rx=".6" fill="#3f8ff0"/><path d="M2.2 10.3c.3-3.8 1.8-5.6 3.6-6.4L4.4 2.4 8.6.6l.9 4.4-1.7-.6c-.9 2.5-2.5 4.9-5.6 5.9z" fill="#4fe03a" stroke="#2fae24" stroke-width=".5"/></svg>
<div style="left:367px;top:171px;width:2px;height:16px;background:#c9c9b6;"></div>
<div style="left:399px;top:245px;width:114px;height:18px;background:#d9d9d9;"></div>
<div style="left:371px;top:208px;width:1px;height:20px;background-image:repeating-linear-gradient(180deg,#9a9a9a 0 1px,transparent 1px 2px);"></div>
<div style="left:371px;top:218px;width:12px;height:1px;background-image:repeating-linear-gradient(90deg,#9a9a9a 0 1px,transparent 1px 2px);"></div>
<div style="left:359px;top:200px;width:5px;height:1px;background-image:repeating-linear-gradient(90deg,#9a9a9a 0 1px,transparent 1px 2px);"></div>
<div style="left:378px;top:236px;width:5px;height:1px;background-image:repeating-linear-gradient(90deg,#9a9a9a 0 1px,transparent 1px 2px);"></div>
<div style="left:397px;top:254px;width:4px;height:1px;background-image:repeating-linear-gradient(90deg,#9a9a9a 0 1px,transparent 1px 2px);"></div>
<div style="left:416px;top:273px;width:4px;height:1px;background-image:repeating-linear-gradient(90deg,#9a9a9a 0 1px,transparent 1px 2px);"></div>
<div style="left:416px;top:291px;width:4px;height:1px;background-image:repeating-linear-gradient(90deg,#9a9a9a 0 1px,transparent 1px 2px);"></div>
<div style="left:435px;top:309px;width:4px;height:1px;background-image:repeating-linear-gradient(90deg,#9a9a9a 0 1px,transparent 1px 2px);"></div>
<div style="left:435px;top:327px;width:4px;height:1px;background-image:repeating-linear-gradient(90deg,#9a9a9a 0 1px,transparent 1px 2px);"></div>
<div style="left:435px;top:345px;width:4px;height:1px;background-image:repeating-linear-gradient(90deg,#9a9a9a 0 1px,transparent 1px 2px);"></div>
<div style="left:435px;top:363px;width:4px;height:1px;background-image:repeating-linear-gradient(90deg,#9a9a9a 0 1px,transparent 1px 2px);"></div>
<div style="left:435px;top:381px;width:4px;height:1px;background-image:repeating-linear-gradient(90deg,#9a9a9a 0 1px,transparent 1px 2px);"></div>
<div style="left:435px;top:399px;width:4px;height:1px;background-image:repeating-linear-gradient(90deg,#9a9a9a 0 1px,transparent 1px 2px);"></div>
<div style="left:435px;top:417px;width:4px;height:1px;background-image:repeating-linear-gradient(90deg,#9a9a9a 0 1px,transparent 1px 2px);"></div>
<div style="left:435px;top:435px;width:4px;height:1px;background-image:repeating-linear-gradient(90deg,#9a9a9a 0 1px,transparent 1px 2px);"></div>
<div style="left:428px;top:299px;width:1px;height:128px;background-image:repeating-linear-gradient(180deg,#9a9a9a 0 1px,transparent 1px 18px);"></div>
<svg style="left:347px;top:197px" width="10" height="8" viewBox="0 0 10 8"><path d="M1 1.5l4 4 4-4" stroke="#262626" stroke-width="1.4" fill="none"/></svg>
<svg style="left:364px;top:192px" width="16" height="16" viewBox="0 0 16 16"><circle cx="4.8" cy="4.8" r="4.3" fill="url(#gg)" stroke="#123a8c" stroke-width=".5"/><path d="M1.36 3.51q1.29 -2.58 3.44 -2.37q-0.21 1.94 -1.29 2.37q-0.43 2.15 -1.50 1.29z" fill="#3fc22e"/><path d="M3.29 6.09q1.94 -0.86 3.01 0.43q-0.43 1.94 -1.94 2.15q-1.07 -0.86 -1.07 -2.58z" fill="#2fa824"/><path d="M7.17 2.43q1.50 1.29 1.63 3.44q-1.29 -0.43 -1.63 -3.44z" fill="#4cc238"/><ellipse cx="3.94" cy="2.86" rx="1.72" ry="1.07" fill="#fff" opacity=".35"/><rect x="7.5" y="2.5" width="6.5" height="12.5" fill="#d5dae0" stroke="#59626d" stroke-width=".8"/><path d="M9 5h3.6M9 7.2h3.6M9 9.4h3.6" stroke="#68717c" stroke-width=".9"/><rect x="11.3" y="12.2" width="1.7" height="1.7" fill="#50e028"/></svg>
<span class="t" style="left:384px;top:192px;line-height:16px;font-size:12px;letter-spacing:-0.617px;">DESKTOP-LSPOOHK (DESKTOP-LSPOOHK\Mini)</span>
<svg style="left:383px;top:210px" width="16" height="16" viewBox="0 0 16 16"><circle cx="10.5" cy="5" r="4.5" fill="url(#gg)" stroke="#123a8c" stroke-width=".5"/><path d="M6.90 3.65q1.35 -2.70 3.60 -2.48q-0.23 2.02 -1.35 2.48q-0.45 2.25 -1.57 1.35z" fill="#3fc22e"/><path d="M8.93 6.35q2.02 -0.90 3.15 0.45q-0.45 2.02 -2.02 2.25q-1.12 -0.90 -1.12 -2.70z" fill="#2fa824"/><path d="M12.97 2.52q1.57 1.35 1.71 3.60q-1.35 -0.45 -1.71 -3.60z" fill="#4cc238"/><ellipse cx="9.60" cy="2.98" rx="1.80" ry="1.12" fill="#fff" opacity=".35"/><ellipse cx="7" cy="13.6" rx="6.3" ry="2" fill="none" stroke="#d8382c" stroke-width="1.3"/><rect x="2.5" y="3.5" width="7" height="8.5" fill="#f4f4f4" stroke="#8b8b8b" stroke-width=".7"/><rect x="4.5" y="5.5" width="7" height="8" fill="#fdfdfd" stroke="#7e7e7e" stroke-width=".7"/><path d="M6 8.5h4M6 10.5h4" stroke="#3a66c4" stroke-width=".9"/></svg>
<span class="t" style="left:403px;top:210px;line-height:16px;font-size:12px;letter-spacing:0.055px;">Application Pools</span>
<svg style="left:365px;top:233px" width="10" height="8" viewBox="0 0 10 8"><path d="M1 1.5l4 4 4-4" stroke="#262626" stroke-width="1.4" fill="none"/></svg>
<svg style="left:383px;top:228px" width="16" height="16" viewBox="0 0 16 16"><path d="M1.2 2.5h5l1.2 1.4h7v9.6H1.2z" fill="#f3dc8c" stroke="#d2b050" stroke-width=".8"/><path d="M1.7 4.8h12.2v8.2H1.7z" fill="url(#fold)"/><rect x="9" y="1.6" width="4.2" height="2" fill="#fafcff" stroke="#9fb4d4" stroke-width=".5"/><circle cx="7.8" cy="9.2" r="2.8" fill="url(#gg)" stroke="#123a8c" stroke-width=".5"/><path d="M5.56 8.36q0.84 -1.68 2.24 -1.54q-0.14 1.26 -0.84 1.54q-0.28 1.40 -0.98 0.84z" fill="#3fc22e"/><path d="M6.82 10.04q1.26 -0.56 1.96 0.28q-0.28 1.26 -1.26 1.40q-0.70 -0.56 -0.70 -1.68z" fill="#2fa824"/><path d="M9.34 7.66q0.98 0.84 1.06 2.24q-0.84 -0.28 -1.06 -2.24z" fill="#4cc238"/><ellipse cx="7.24" cy="7.94" rx="1.12" ry="0.70" fill="#fff" opacity=".35"/></svg>
<span class="t" style="left:403px;top:228px;line-height:16px;font-size:12px;letter-spacing:-0.636px;">Sites</span>
<svg style="left:384px;top:251px" width="10" height="8" viewBox="0 0 10 8"><path d="M1 1.5l4 4 4-4" stroke="#262626" stroke-width="1.4" fill="none"/></svg>
<svg style="left:401px;top:246px" width="16" height="16" viewBox="0 0 16 16"><circle cx="7" cy="7" r="6.5" fill="url(#gg)" stroke="#123a8c" stroke-width=".5"/><path d="M1.80 5.05q1.95 -3.90 5.20 -3.58q-0.33 2.93 -1.95 3.58q-0.65 3.25 -2.27 1.95z" fill="#3fc22e"/><path d="M4.72 8.95q2.93 -1.30 4.55 0.65q-0.65 2.93 -2.93 3.25q-1.62 -1.30 -1.62 -3.90z" fill="#2fa824"/><path d="M10.57 3.42q2.27 1.95 2.47 5.20q-1.95 -0.65 -2.47 -5.20z" fill="#4cc238"/><ellipse cx="5.70" cy="4.07" rx="2.60" ry="1.62" fill="#fff" opacity=".35"/><circle cx="11.5" cy="11.8" r="4" fill="url(#hq)" stroke="#e8eefc" stroke-width=".9"/><text x="11.5" y="14.4" font-size="6.8" font-weight="bold" fill="#fff" text-anchor="middle" font-family="Liberation Sans,sans-serif">?</text></svg>
<span class="t" style="left:422px;top:246px;line-height:16px;font-size:12px;letter-spacing:-0.177px;">Default Web Site</span>
<svg style="left:405px;top:268px" width="7" height="10" viewBox="0 0 7 10"><path d="M1.5 1l4 4-4 4" stroke="#a0a0a0" stroke-width="1.4" fill="none"/></svg>
<svg style="left:421px;top:264px" width="16" height="16" viewBox="0 0 16 16"><path d="M1.2 2.5h5l1.2 1.4h7v9.6H1.2z" fill="#f3dc8c" stroke="#d2b050" stroke-width=".8"/><path d="M1.7 4.8h12.2v8.2H1.7z" fill="url(#fold)"/><rect x="9" y="1.6" width="4.2" height="2" fill="#fafcff" stroke="#9fb4d4" stroke-width=".5"/></svg>
<span class="t" style="left:441px;top:264px;line-height:16px;font-size:12px;letter-spacing:-0.132px;">aspnet_client</span>
<svg style="left:403px;top:287px" width="10" height="8" viewBox="0 0 10 8"><path d="M1 1.5l4 4 4-4" stroke="#262626" stroke-width="1.4" fill="none"/></svg>
<svg style="left:421px;top:282px" width="16" height="16" viewBox="0 0 16 16"><circle cx="10" cy="5.5" r="5" fill="url(#gg)" stroke="#123a8c" stroke-width=".5"/><path d="M6.00 4.00q1.50 -3.00 4.00 -2.75q-0.25 2.25 -1.50 2.75q-0.50 2.50 -1.75 1.50z" fill="#3fc22e"/><path d="M8.25 7.00q2.25 -1.00 3.50 0.50q-0.50 2.25 -2.25 2.50q-1.25 -1.00 -1.25 -3.00z" fill="#2fa824"/><path d="M12.75 2.75q1.75 1.50 1.90 4.00q-1.50 -0.50 -1.90 -4.00z" fill="#4cc238"/><ellipse cx="9.00" cy="3.25" rx="2.00" ry="1.25" fill="#fff" opacity=".35"/><rect x="1.5" y="6.5" width="6.5" height="8.5" fill="#f7f7f7" stroke="#7a7a7a" stroke-width=".7"/><rect x="3.5" y="5" width="6.5" height="8.5" fill="#fdfdfd" stroke="#7a7a7a" stroke-width=".7"/><path d="M5 8h3.5M5 10h3.5M5 12h2.5" stroke="#3a66c4" stroke-width=".8"/></svg>
<span class="t" style="left:441px;top:282px;line-height:16px;font-size:12px;letter-spacing:-0.314px;">Backend</span>
<svg style="left:424px;top:304px" width="7" height="10" viewBox="0 0 7 10"><path d="M1.5 1l4 4-4 4" stroke="#a0a0a0" stroke-width="1.4" fill="none"/></svg>
<svg style="left:440px;top:300px" width="16" height="16" viewBox="0 0 16 16"><path d="M1.2 2.5h5l1.2 1.4h7v9.6H1.2z" fill="#f3dc8c" stroke="#d2b050" stroke-width=".8"/><path d="M1.7 4.8h12.2v8.2H1.7z" fill="url(#fold)"/><rect x="9" y="1.6" width="4.2" height="2" fill="#fafcff" stroke="#9fb4d4" stroke-width=".5"/></svg>
<span class="t" style="left:460px;top:300px;line-height:16px;font-size:12px;letter-spacing:-0.297px;">App_Data</span>
<svg style="left:424px;top:322px" width="7" height="10" viewBox="0 0 7 10"><path d="M1.5 1l4 4-4 4" stroke="#a0a0a0" stroke-width="1.4" fill="none"/></svg>
<svg style="left:440px;top:318px" width="16" height="16" viewBox="0 0 16 16"><path d="M1.2 2.5h5l1.2 1.4h7v9.6H1.2z" fill="#f3dc8c" stroke="#d2b050" stroke-width=".8"/><path d="M1.7 4.8h12.2v8.2H1.7z" fill="url(#fold)"/><rect x="9" y="1.6" width="4.2" height="2" fill="#fafcff" stroke="#9fb4d4" stroke-width=".5"/></svg>
<span class="t" style="left:460px;top:318px;line-height:16px;font-size:12px;letter-spacing:0.329px;">bin</span>
<svg style="left:424px;top:340px" width="7" height="10" viewBox="0 0 7 10"><path d="M1.5 1l4 4-4 4" stroke="#a0a0a0" stroke-width="1.4" fill="none"/></svg>
<svg style="left:440px;top:336px" width="16" height="16" viewBox="0 0 16 16"><path d="M1.2 2.5h5l1.2 1.4h7v9.6H1.2z" fill="#f3dc8c" stroke="#d2b050" stroke-width=".8"/><path d="M1.7 4.8h12.2v8.2H1.7z" fill="url(#fold)"/><rect x="9" y="1.6" width="4.2" height="2" fill="#fafcff" stroke="#9fb4d4" stroke-width=".5"/></svg>
<span class="t" style="left:460px;top:336px;line-height:16px;font-size:12px;letter-spacing:0.081px;">Contract</span>
<svg style="left:424px;top:358px" width="7" height="10" viewBox="0 0 7 10"><path d="M1.5 1l4 4-4 4" stroke="#a0a0a0" stroke-width="1.4" fill="none"/></svg>
<svg style="left:440px;top:354px" width="16" height="16" viewBox="0 0 16 16"><path d="M1.2 2.5h5l1.2 1.4h7v9.6H1.2z" fill="#f3dc8c" stroke="#d2b050" stroke-width=".8"/><path d="M1.7 4.8h12.2v8.2H1.7z" fill="url(#fold)"/><rect x="9" y="1.6" width="4.2" height="2" fill="#fafcff" stroke="#9fb4d4" stroke-width=".5"/></svg>
<span class="t" style="left:460px;top:354px;line-height:16px;font-size:12px;letter-spacing:-0.059px;">Helper</span>
<svg style="left:424px;top:376px" width="7" height="10" viewBox="0 0 7 10"><path d="M1.5 1l4 4-4 4" stroke="#a0a0a0" stroke-width="1.4" fill="none"/></svg>
<svg style="left:440px;top:372px" width="16" height="16" viewBox="0 0 16 16"><path d="M1.2 2.5h5l1.2 1.4h7v9.6H1.2z" fill="#f3dc8c" stroke="#d2b050" stroke-width=".8"/><path d="M1.7 4.8h12.2v8.2H1.7z" fill="url(#fold)"/><rect x="9" y="1.6" width="4.2" height="2" fill="#fafcff" stroke="#9fb4d4" stroke-width=".5"/></svg>
<span class="t" style="left:460px;top:372px;line-height:16px;font-size:12px;letter-spacing:-0.254px;">Libs</span>
<svg style="left:424px;top:394px" width="7" height="10" viewBox="0 0 7 10"><path d="M1.5 1l4 4-4 4" stroke="#a0a0a0" stroke-width="1.4" fill="none"/></svg>
<svg style="left:440px;top:390px" width="16" height="16" viewBox="0 0 16 16"><path d="M1.2 2.5h5l1.2 1.4h7v9.6H1.2z" fill="#f3dc8c" stroke="#d2b050" stroke-width=".8"/><path d="M1.7 4.8h12.2v8.2H1.7z" fill="url(#fold)"/><rect x="9" y="1.6" width="4.2" height="2" fill="#fafcff" stroke="#9fb4d4" stroke-width=".5"/></svg>
<span class="t" style="left:460px;top:390px;line-height:16px;font-size:12px;letter-spacing:0.032px;">My Project</span>
<svg style="left:424px;top:412px" width="7" height="10" viewBox="0 0 7 10"><path d="M1.5 1l4 4-4 4" stroke="#a0a0a0" stroke-width="1.4" fill="none"/></svg>
<svg style="left:440px;top:408px" width="16" height="16" viewBox="0 0 16 16"><path d="M1.2 2.5h5l1.2 1.4h7v9.6H1.2z" fill="#f3dc8c" stroke="#d2b050" stroke-width=".8"/><path d="M1.7 4.8h12.2v8.2H1.7z" fill="url(#fold)"/><rect x="9" y="1.6" width="4.2" height="2" fill="#fafcff" stroke="#9fb4d4" stroke-width=".5"/></svg>
<span class="t" style="left:460px;top:408px;line-height:16px;font-size:12px;">obj</span>
<svg style="left:424px;top:430px" width="7" height="10" viewBox="0 0 7 10"><path d="M1.5 1l4 4-4 4" stroke="#a0a0a0" stroke-width="1.4" fill="none"/></svg>
<svg style="left:440px;top:426px" width="16" height="16" viewBox="0 0 16 16"><path d="M1.2 2.5h5l1.2 1.4h7v9.6H1.2z" fill="#f3dc8c" stroke="#d2b050" stroke-width=".8"/><path d="M1.7 4.8h12.2v8.2H1.7z" fill="url(#fold)"/><rect x="9" y="1.6" width="4.2" height="2" fill="#fafcff" stroke="#9fb4d4" stroke-width=".5"/></svg>
<span class="t" style="left:460px;top:426px;line-height:16px;font-size:12px;letter-spacing:-0.136px;">Repository</span>
<div style="left:667px;top:142px;width:889px;height:773px;background:#ffffff;border:1px solid #8e908e"></div>
<svg style="left:680px;top:155px" width="32" height="32" viewBox="0 0 32 32"><defs><radialGradient id="bg1" cx=".45" cy=".32" r=".72"><stop offset="0" stop-color="#8ff0ff"/><stop offset=".25" stop-color="#3fb4ea"/><stop offset=".6" stop-color="#2a55c4"/><stop offset="1" stop-color="#1a2a9a"/></radialGradient><radialGradient id="bg2" cx=".5" cy=".5" r=".5"><stop offset="0" stop-color="rgba(0,0,0,.45)"/><stop offset="1" stop-color="rgba(0,0,0,0)"/></radialGradient><clipPath id="bgc"><circle cx="15.5" cy="15.5" r="14.5"/></clipPath></defs><ellipse cx="19" cy="29.5" rx="10" ry="2.2" fill="url(#bg2)"/><circle cx="15.5" cy="15.5" r="14.5" fill="url(#bg1)"/><g clip-path="url(#bgc)"><path d="M0 10C2 5 6 2 11 1l3 .5-1 3 1.5 1.5-2 2.5-3 1.5-1.5 3 1.5 2 2 1.8-1 .8-3-1.5-2-2.5-2 1-2-1z" fill="#2fb32a"/><path d="M6.5 4.5l5-2 2 1.5-2.5 4-3.5 1.5-2-1.5z" fill="#d8f8d0" opacity=".75"/><path d="M6.5 20.5c2-2 5-2 8-1l3 1.8 2.2 2-.5 2.7-3.5 2.5-4 1.3-3-2.5-2-4z" fill="#1f9a22"/><path d="M24.5 5.5l2.5 1.5 1.5 3 2 2.5v5l-2 1.5-2.5-1.5-1.2-4 .3-3.5-.8-2z" fill="#4fc238"/><path d="M11.5 1l3-.5 1 2-2 1.5-1.5-1z" fill="#f2fbff"/></g><circle cx="15.5" cy="15.5" r="14.5" fill="none" stroke="#1a2f9a" stroke-width=".5" opacity=".7"/></svg>
<span class="t" style="left:730px;top:157px;line-height:24px;font-size:19px;letter-spacing:0.081px;">Handler Mappings</span>
<span class="t" style="left:683px;top:200px;line-height:16px;font-size:12px;letter-spacing:-0.160px;">Use this feature to specify the resources, such as DLLs and managed code, that handle responses for specific request types.</span>
<div style="left:681px;top:222px;width:861px;height:26px;background:linear-gradient(#f9f9f9,#e3e1e3);border-top:1px solid #e2e2e2;border-bottom:1px solid #3f3f6f"></div>
<span class="t" style="left:688px;top:227px;line-height:16px;font-size:12px;letter-spacing:-0.077px;">Group by:</span>
<div style="left:745px;top:224px;width:115px;height:23px;background:#ffffff;"></div>
<span class="t" style="left:749px;top:228px;line-height:16px;font-size:12px;letter-spacing:-0.404px;">State</span>
<div style="left:848px;top:224px;width:12px;height:23px;background:#f6f6f6;"></div>
<svg style="left:850px;top:234px" width="7" height="4" viewBox="0 0 7 4"><path d="M0 0h7L3.5 4z" fill="#000"/></svg>
<svg style="left:838px;top:248px" width="9" height="5" viewBox="0 0 9 5"><path d="M.5 4.5l4-4 4 4" stroke="#7a7a7a" stroke-width="1" fill="none"/></svg>
<div style="left:681px;top:272px;width:1px;height:612px;background:#e6e6e6;"></div>
<div style="left:682px;top:272px;width:320px;height:612px;background:#f7f7f7;"></div>
<div style="left:1002px;top:248px;width:1px;height:24px;background:#e5e5e5;"></div>
<div style="left:1002px;top:272px;width:1px;height:612px;background:#eaf2fb;"></div>
<div style="left:1122px;top:248px;width:1px;height:24px;background:#e5e5e5;"></div>
<div style="left:1122px;top:272px;width:1px;height:612px;background:#eaf2fb;"></div>
<div style="left:1222px;top:248px;width:1px;height:24px;background:#e5e5e5;"></div>
<div style="left:1222px;top:272px;width:1px;height:612px;background:#eaf2fb;"></div>
<div style="left:1322px;top:248px;width:1px;height:24px;background:#e5e5e5;"></div>
<div style="left:1322px;top:272px;width:1px;height:612px;background:#eaf2fb;"></div>
<div style="left:1502px;top:248px;width:1px;height:24px;background:#e5e5e5;"></div>
<div style="left:1502px;top:272px;width:1px;height:612px;background:#eaf2fb;"></div>
<div style="left:682px;top:545px;width:844px;height:19px;background:#cce8ff;"></div>
<div style="left:682px;top:545px;width:320px;height:19px;background:#c5dff9;"></div>
<div style="left:682px;top:545px;width:844px;height:19px;border:1px dotted #2a2a2a"></div>
<span class="t" style="left:687px;top:252px;line-height:16px;font-size:12px;">Name</span>
<span class="t" style="left:1009px;top:252px;line-height:16px;font-size:12px;letter-spacing:-0.297px;">Path</span>
<span class="t" style="left:1129px;top:252px;line-height:16px;font-size:12px;letter-spacing:-0.404px;">State</span>
<span class="t" style="left:1229px;top:252px;line-height:16px;font-size:12px;letter-spacing:-0.313px;">Path Type</span>
<span class="t" style="left:1329px;top:252px;line-height:16px;font-size:12px;">Handler</span>
<span class="t" style="left:1509px;top:252px;line-height:16px;font-size:12px;letter-spacing:-0.337px;">Ent</span>
<div style="left:681px;top:272px;width:845px;height:612px;overflow:hidden">
<span class="t" style="left:6px;top:-5px;line-height:16px;font-size:12px;letter-spacing:-0.294px;">svc-ISAPI-2.0-64</span>
<span class="t" style="left:328px;top:-5px;line-height:16px;font-size:12px;letter-spacing:-0.201px;">*.svc</span>
<span class="t" style="left:448px;top:-5px;line-height:16px;font-size:12px;letter-spacing:-0.363px;">Enabled</span>
<span class="t" style="left:548px;top:-5px;line-height:16px;font-size:12px;letter-spacing:-0.155px;">Unspecified</span>
<span class="t" style="left:648px;top:-5px;line-height:16px;font-size:12px;letter-spacing:0.027px;">IsapiModule</span>
<span class="t" style="left:828px;top:-5px;line-height:16px;font-size:12px;letter-spacing:-0.061px;">Inh</span>
<span class="t" style="left:6px;top:15px;line-height:16px;font-size:12px;letter-spacing:-0.319px;">svc-ISAPI-4.0_32bit</span>
<span class="t" style="left:328px;top:15px;line-height:16px;font-size:12px;letter-spacing:-0.201px;">*.svc</span>
<span class="t" style="left:448px;top:15px;line-height:16px;font-size:12px;letter-spacing:-0.363px;">Enabled</span>
<span class="t" style="left:548px;top:15px;line-height:16px;font-size:12px;letter-spacing:-0.155px;">Unspecified</span>
<span class="t" style="left:648px;top:15px;line-height:16px;font-size:12px;letter-spacing:0.027px;">IsapiModule</span>
<span class="t" style="left:828px;top:15px;line-height:16px;font-size:12px;letter-spacing:-0.061px;">Inh</span>
<span class="t" style="left:6px;top:35px;line-height:16px;font-size:12px;letter-spacing:-0.319px;">svc-ISAPI-4.0_64bit</span>
<span class="t" style="left:328px;top:35px;line-height:16px;font-size:12px;letter-spacing:-0.201px;">*.svc</span>
<span class="t" style="left:448px;top:35px;line-height:16px;font-size:12px;letter-spacing:-0.363px;">Enabled</span>
<span class="t" style="left:548px;top:35px;line-height:16px;font-size:12px;letter-spacing:-0.155px;">Unspecified</span>
<span class="t" style="left:648px;top:35px;line-height:16px;font-size:12px;letter-spacing:0.027px;">IsapiModule</span>
<span class="t" style="left:828px;top:35px;line-height:16px;font-size:12px;letter-spacing:-0.061px;">Inh</span>
<span class="t" style="left:6px;top:55px;line-height:16px;font-size:12px;letter-spacing:-0.100px;">TraceHandler-Integrated</span>
<span class="t" style="left:328px;top:55px;line-height:16px;font-size:12px;letter-spacing:-0.262px;">trace.axd</span>
<span class="t" style="left:448px;top:55px;line-height:16px;font-size:12px;letter-spacing:-0.363px;">Enabled</span>
<span class="t" style="left:548px;top:55px;line-height:16px;font-size:12px;letter-spacing:-0.155px;">Unspecified</span>
<span class="t" style="left:648px;top:55px;line-height:16px;font-size:12px;letter-spacing:-0.289px;">System.Web.Handlers.TraceH...</span>
<span class="t" style="left:828px;top:55px;line-height:16px;font-size:12px;letter-spacing:-0.061px;">Inh</span>
<span class="t" style="left:6px;top:75px;line-height:16px;font-size:12px;letter-spacing:-0.110px;">TraceHandler-Integrated-4.0</span>
<span class="t" style="left:328px;top:75px;line-height:16px;font-size:12px;letter-spacing:-0.262px;">trace.axd</span>
<span class="t" style="left:448px;top:75px;line-height:16px;font-size:12px;letter-spacing:-0.363px;">Enabled</span>
<span class="t" style="left:548px;top:75px;line-height:16px;font-size:12px;letter-spacing:-0.155px;">Unspecified</span>
<span class="t" style="left:648px;top:75px;line-height:16px;font-size:12px;letter-spacing:-0.289px;">System.Web.Handlers.TraceH...</span>
<span class="t" style="left:828px;top:75px;line-height:16px;font-size:12px;letter-spacing:-0.061px;">Inh</span>
<span class="t" style="left:6px;top:95px;line-height:16px;font-size:12px;letter-spacing:-0.462px;">TRACEVerbHandler</span>
<span class="t" style="left:328px;top:95px;line-height:16px;font-size:12px;">*</span>
<span class="t" style="left:448px;top:95px;line-height:16px;font-size:12px;letter-spacing:-0.363px;">Enabled</span>
<span class="t" style="left:548px;top:95px;line-height:16px;font-size:12px;letter-spacing:-0.155px;">Unspecified</span>
<span class="t" style="left:648px;top:95px;line-height:16px;font-size:12px;letter-spacing:0.123px;">ProtocolSupportModule</span>
<span class="t" style="left:828px;top:95px;line-height:16px;font-size:12px;letter-spacing:-0.061px;">Inh</span>
<span class="t" style="left:6px;top:115px;line-height:16px;font-size:12px;letter-spacing:0.130px;">vbhtm-Integrated-4.0</span>
<span class="t" style="left:328px;top:115px;line-height:16px;font-size:12px;letter-spacing:0.474px;">*.vbhtm</span>
<span class="t" style="left:448px;top:115px;line-height:16px;font-size:12px;letter-spacing:-0.363px;">Enabled</span>
<span class="t" style="left:548px;top:115px;line-height:16px;font-size:12px;letter-spacing:-0.155px;">Unspecified</span>
<span class="t" style="left:648px;top:115px;line-height:16px;font-size:12px;letter-spacing:-0.066px;">System.Web.HttpForbiddenH...</span>
<span class="t" style="left:828px;top:115px;line-height:16px;font-size:12px;letter-spacing:-0.061px;">Inh</span>
<span class="t" style="left:6px;top:135px;line-height:16px;font-size:12px;letter-spacing:-0.130px;">vbhtm-ISAPI-4.0_32bit</span>
<span class="t" style="left:328px;top:135px;line-height:16px;font-size:12px;letter-spacing:0.474px;">*.vbhtm</span>
<span class="t" style="left:448px;top:135px;line-height:16px;font-size:12px;letter-spacing:-0.363px;">Enabled</span>
<span class="t" style="left:548px;top:135px;line-height:16px;font-size:12px;letter-spacing:-0.155px;">Unspecified</span>
<span class="t" style="left:648px;top:135px;line-height:16px;font-size:12px;letter-spacing:0.027px;">IsapiModule</span>
<span class="t" style="left:828px;top:135px;line-height:16px;font-size:12px;letter-spacing:-0.061px;">Inh</span>
<span class="t" style="left:6px;top:155px;line-height:16px;font-size:12px;letter-spacing:-0.130px;">vbhtm-ISAPI-4.0_64bit</span>
<span class="t" style="left:328px;top:155px;line-height:16px;font-size:12px;letter-spacing:0.474px;">*.vbhtm</span>
<span class="t" style="left:448px;top:155px;line-height:16px;font-size:12px;letter-spacing:-0.363px;">Enabled</span>
<span class="t" style="left:548px;top:155px;line-height:16px;font-size:12px;letter-spacing:-0.155px;">Unspecified</span>
<span class="t" style="left:648px;top:155px;line-height:16px;font-size:12px;letter-spacing:0.027px;">IsapiModule</span>
<span class="t" style="left:828px;top:155px;line-height:16px;font-size:12px;letter-spacing:-0.061px;">Inh</span>
<span class="t" style="left:6px;top:175px;line-height:16px;font-size:12px;letter-spacing:0.140px;">vbhtml-Integrated-4.0</span>
<span class="t" style="left:328px;top:175px;line-height:16px;font-size:12px;letter-spacing:0.394px;">*.vbhtml</span>
<span class="t" style="left:448px;top:175px;line-height:16px;font-size:12px;letter-spacing:-0.363px;">Enabled</span>
<span class="t" style="left:548px;top:175px;line-height:16px;font-size:12px;letter-spacing:-0.155px;">Unspecified</span>
<span class="t" style="left:648px;top:175px;line-height:16px;font-size:12px;letter-spacing:-0.066px;">System.Web.HttpForbiddenH...</span>
<span class="t" style="left:828px;top:175px;line-height:16px;font-size:12px;letter-spacing:-0.061px;">Inh</span>
<span class="t" style="left:6px;top:195px;line-height:16px;font-size:12px;letter-spacing:-0.109px;">vbhtml-ISAPI-4.0_32bit</span>
<span class="t" style="left:328px;top:195px;line-height:16px;font-size:12px;letter-spacing:0.394px;">*.vbhtml</span>
<span class="t" style="left:448px;top:195px;line-height:16px;font-size:12px;letter-spacing:-0.363px;">Enabled</span>
<span class="t" style="left:548px;top:195px;line-height:16px;font-size:12px;letter-spacing:-0.155px;">Unspecified</span>
<span class="t" style="left:648px;top:195px;line-height:16px;font-size:12px;letter-spacing:0.027px;">IsapiModule</span>
<span class="t" style="left:828px;top:195px;line-height:16px;font-size:12px;letter-spacing:-0.061px;">Inh</span>
<span class="t" style="left:6px;top:215px;line-height:16px;font-size:12px;letter-spacing:-0.109px;">vbhtml-ISAPI-4.0_64bit</span>
<span class="t" style="left:328px;top:215px;line-height:16px;font-size:12px;letter-spacing:0.394px;">*.vbhtml</span>
<span class="t" style="left:448px;top:215px;line-height:16px;font-size:12px;letter-spacing:-0.363px;">Enabled</span>
<span class="t" style="left:548px;top:215px;line-height:16px;font-size:12px;letter-spacing:-0.155px;">Unspecified</span>
<span class="t" style="left:648px;top:215px;line-height:16px;font-size:12px;letter-spacing:0.027px;">IsapiModule</span>
<span class="t" style="left:828px;top:215px;line-height:16px;font-size:12px;letter-spacing:-0.061px;">Inh</span>
<span class="t" style="left:6px;top:235px;line-height:16px;font-size:12px;letter-spacing:0.076px;">WebAdminHandler-Integrated</span>
<span class="t" style="left:328px;top:235px;line-height:16px;font-size:12px;letter-spacing:0.029px;">WebAdmin.axd</span>
<span class="t" style="left:448px;top:235px;line-height:16px;font-size:12px;letter-spacing:-0.363px;">Enabled</span>
<span class="t" style="left:548px;top:235px;line-height:16px;font-size:12px;letter-spacing:-0.155px;">Unspecified</span>
<span class="t" style="left:648px;top:235px;line-height:16px;font-size:12px;letter-spacing:-0.219px;">System.Web.Handlers.WebAd...</span>
<span class="t" style="left:828px;top:235px;line-height:16px;font-size:12px;letter-spacing:-0.061px;">Inh</span>
<span class="t" style="left:6px;top:255px;line-height:16px;font-size:12px;letter-spacing:0.059px;">WebAdminHandler-Integrated-4.0</span>
<span class="t" style="left:328px;top:255px;line-height:16px;font-size:12px;letter-spacing:0.029px;">WebAdmin.axd</span>
<span class="t" style="left:448px;top:255px;line-height:16px;font-size:12px;letter-spacing:-0.363px;">Enabled</span>
<span class="t" style="left:548px;top:255px;line-height:16px;font-size:12px;letter-spacing:-0.155px;">Unspecified</span>
<span class="t" style="left:648px;top:255px;line-height:16px;font-size:12px;letter-spacing:-0.219px;">System.Web.Handlers.WebAd...</span>
<span class="t" style="left:828px;top:255px;line-height:16px;font-size:12px;letter-spacing:-0.061px;">Inh</span>
<span class="t" style="left:6px;top:275px;line-height:16px;font-size:12px;letter-spacing:-0.457px;">WebDAV</span>
<span class="t" style="left:328px;top:275px;line-height:16px;font-size:12px;">*</span>
<span class="t" style="left:448px;top:275px;line-height:16px;font-size:12px;letter-spacing:-0.363px;">Enabled</span>
<span class="t" style="left:548px;top:275px;line-height:16px;font-size:12px;letter-spacing:-0.155px;">Unspecified</span>
<span class="t" style="left:648px;top:275px;line-height:16px;font-size:12px;letter-spacing:-0.050px;">WebDAVModule</span>
<span class="t" style="left:828px;top:275px;line-height:16px;font-size:12px;letter-spacing:-0.061px;">Inh</span>
<span class="t" style="left:6px;top:295px;line-height:16px;font-size:12px;letter-spacing:-0.101px;">WebServiceHandlerFactory-Integrated</span>
<span class="t" style="left:328px;top:295px;line-height:16px;font-size:12px;letter-spacing:-0.279px;">*.asmx</span>
<span class="t" style="left:448px;top:295px;line-height:16px;font-size:12px;letter-spacing:-0.363px;">Enabled</span>
<span class="t" style="left:548px;top:295px;line-height:16px;font-size:12px;letter-spacing:-0.155px;">Unspecified</span>
<span class="t" style="left:648px;top:295px;line-height:16px;font-size:12px;letter-spacing:-0.261px;">System.Web.Services.Protoco...</span>
<span class="t" style="left:828px;top:295px;line-height:16px;font-size:12px;letter-spacing:-0.061px;">Inh</span>
<span class="t" style="left:6px;top:315px;line-height:16px;font-size:12px;letter-spacing:-0.108px;">WebServiceHandlerFactory-Integrated-4.0</span>
<span class="t" style="left:328px;top:315px;line-height:16px;font-size:12px;letter-spacing:-0.279px;">*.asmx</span>
<span class="t" style="left:448px;top:315px;line-height:16px;font-size:12px;letter-spacing:-0.363px;">Enabled</span>
<span class="t" style="left:548px;top:315px;line-height:16px;font-size:12px;letter-spacing:-0.155px;">Unspecified</span>
<span class="t" style="left:648px;top:315px;line-height:16px;font-size:12px;letter-spacing:-0.387px;">System.Web.Script.Services.S...</span>
<span class="t" style="left:828px;top:315px;line-height:16px;font-size:12px;letter-spacing:-0.061px;">Inh</span>
<span class="t" style="left:6px;top:335px;line-height:16px;font-size:12px;letter-spacing:-0.231px;">WebServiceHandlerFactory-ISAPI-2.0</span>
<span class="t" style="left:328px;top:335px;line-height:16px;font-size:12px;letter-spacing:-0.279px;">*.asmx</span>
<span class="t" style="left:448px;top:335px;line-height:16px;font-size:12px;letter-spacing:-0.363px;">Enabled</span>
<span class="t" style="left:548px;top:335px;line-height:16px;font-size:12px;letter-spacing:-0.155px;">Unspecified</span>
<span class="t" style="left:648px;top:335px;line-height:16px;font-size:12px;letter-spacing:0.027px;">IsapiModule</span>
<span class="t" style="left:828px;top:335px;line-height:16px;font-size:12px;letter-spacing:-0.061px;">Inh</span>
<span class="t" style="left:6px;top:355px;line-height:16px;font-size:12px;letter-spacing:-0.222px;">WebServiceHandlerFactory-ISAPI-2.0-64</span>
<span class="t" style="left:328px;top:355px;line-height:16px;font-size:12px;letter-spacing:-0.279px;">*.asmx</span>
<span class="t" style="left:448px;top:355px;line-height:16px;font-size:12px;letter-spacing:-0.363px;">Enabled</span>
<span class="t" style="left:548px;top:355px;line-height:16px;font-size:12px;letter-spacing:-0.155px;">Unspecified</span>
<span class="t" style="left:648px;top:355px;line-height:16px;font-size:12px;letter-spacing:0.027px;">IsapiModule</span>
<span class="t" style="left:828px;top:355px;line-height:16px;font-size:12px;letter-spacing:-0.061px;">Inh</span>
<span class="t" style="left:6px;top:375px;line-height:16px;font-size:12px;letter-spacing:-0.239px;">WebServiceHandlerFactory-ISAPI-4.0_32bit</span>
<span class="t" style="left:328px;top:375px;line-height:16px;font-size:12px;letter-spacing:-0.279px;">*.asmx</span>
<span class="t" style="left:448px;top:375px;line-height:16px;font-size:12px;letter-spacing:-0.363px;">Enabled</span>
<span class="t" style="left:548px;top:375px;line-height:16px;font-size:12px;letter-spacing:-0.155px;">Unspecified</span>
<span class="t" style="left:648px;top:375px;line-height:16px;font-size:12px;letter-spacing:0.027px;">IsapiModule</span>
<span class="t" style="left:828px;top:375px;line-height:16px;font-size:12px;letter-spacing:-0.061px;">Inh</span>
<span class="t" style="left:6px;top:395px;line-height:16px;font-size:12px;letter-spacing:-0.239px;">WebServiceHandlerFactory-ISAPI-4.0_64bit</span>
<span class="t" style="left:328px;top:395px;line-height:16px;font-size:12px;letter-spacing:-0.279px;">*.asmx</span>
<span class="t" style="left:448px;top:395px;line-height:16px;font-size:12px;letter-spacing:-0.363px;">Enabled</span>
<span class="t" style="left:548px;top:395px;line-height:16px;font-size:12px;letter-spacing:-0.155px;">Unspecified</span>
<span class="t" style="left:648px;top:395px;line-height:16px;font-size:12px;letter-spacing:0.027px;">IsapiModule</span>
<span class="t" style="left:828px;top:395px;line-height:16px;font-size:12px;letter-spacing:-0.061px;">Inh</span>
<span class="t" style="left:6px;top:415px;line-height:16px;font-size:12px;letter-spacing:0.047px;">xamlx-Integrated-4.0</span>
<span class="t" style="left:328px;top:415px;line-height:16px;font-size:12px;letter-spacing:-0.049px;">*.xamlx</span>
<span class="t" style="left:448px;top:415px;line-height:16px;font-size:12px;letter-spacing:-0.363px;">Enabled</span>
<span class="t" style="left:548px;top:415px;line-height:16px;font-size:12px;letter-spacing:-0.155px;">Unspecified</span>
<span class="t" style="left:648px;top:415px;line-height:16px;font-size:12px;letter-spacing:-0.082px;">System.Xaml.Hosting.XamlHt...</span>
<span class="t" style="left:828px;top:415px;line-height:16px;font-size:12px;letter-spacing:-0.061px;">Inh</span>
<span class="t" style="left:6px;top:435px;line-height:16px;font-size:12px;letter-spacing:-0.209px;">xamlx-ISAPI-4.0_32bit</span>
<span class="t" style="left:328px;top:435px;line-height:16px;font-size:12px;letter-spacing:-0.049px;">*.xamlx</span>
<span class="t" style="left:448px;top:435px;line-height:16px;font-size:12px;letter-spacing:-0.363px;">Enabled</span>
<span class="t" style="left:548px;top:435px;line-height:16px;font-size:12px;letter-spacing:-0.155px;">Unspecified</span>
<span class="t" style="left:648px;top:435px;line-height:16px;font-size:12px;letter-spacing:0.027px;">IsapiModule</span>
<span class="t" style="left:828px;top:435px;line-height:16px;font-size:12px;letter-spacing:-0.061px;">Inh</span>
<span class="t" style="left:6px;top:455px;line-height:16px;font-size:12px;letter-spacing:-0.209px;">xamlx-ISAPI-4.0_64bit</span>
<span class="t" style="left:328px;top:455px;line-height:16px;font-size:12px;letter-spacing:-0.049px;">*.xamlx</span>
<span class="t" style="left:448px;top:455px;line-height:16px;font-size:12px;letter-spacing:-0.363px;">Enabled</span>
<span class="t" style="left:548px;top:455px;line-height:16px;font-size:12px;letter-spacing:-0.155px;">Unspecified</span>
<span class="t" style="left:648px;top:455px;line-height:16px;font-size:12px;letter-spacing:0.027px;">IsapiModule</span>
<span class="t" style="left:828px;top:455px;line-height:16px;font-size:12px;letter-spacing:-0.061px;">Inh</span>
<span class="t" style="left:6px;top:475px;line-height:16px;font-size:12px;letter-spacing:-0.120px;">xoml-64-ISAPI-2.0</span>
<span class="t" style="left:328px;top:475px;line-height:16px;font-size:12px;letter-spacing:0.277px;">*.xoml</span>
<span class="t" style="left:448px;top:475px;line-height:16px;font-size:12px;letter-spacing:-0.363px;">Enabled</span>
<span class="t" style="left:548px;top:475px;line-height:16px;font-size:12px;letter-spacing:-0.155px;">Unspecified</span>
<span class="t" style="left:648px;top:475px;line-height:16px;font-size:12px;letter-spacing:0.027px;">IsapiModule</span>
<span class="t" style="left:828px;top:475px;line-height:16px;font-size:12px;letter-spacing:-0.061px;">Inh</span>
<span class="t" style="left:6px;top:495px;line-height:16px;font-size:12px;letter-spacing:0.175px;">xoml-Integrated</span>
<span class="t" style="left:328px;top:495px;line-height:16px;font-size:12px;letter-spacing:0.277px;">*.xoml</span>
<span class="t" style="left:448px;top:495px;line-height:16px;font-size:12px;letter-spacing:-0.363px;">Enabled</span>
<span class="t" style="left:548px;top:495px;line-height:16px;font-size:12px;letter-spacing:-0.155px;">Unspecified</span>
<span class="t" style="left:648px;top:495px;line-height:16px;font-size:12px;letter-spacing:-0.131px;">System.ServiceModel.Activati...</span>
<span class="t" style="left:828px;top:495px;line-height:16px;font-size:12px;letter-spacing:-0.061px;">Inh</span>
<span class="t" style="left:6px;top:515px;line-height:16px;font-size:12px;letter-spacing:0.102px;">xoml-Integrated-4.0</span>
<span class="t" style="left:328px;top:515px;line-height:16px;font-size:12px;letter-spacing:0.277px;">*.xoml</span>
<span class="t" style="left:448px;top:515px;line-height:16px;font-size:12px;letter-spacing:-0.363px;">Enabled</span>
<span class="t" style="left:548px;top:515px;line-height:16px;font-size:12px;letter-spacing:-0.155px;">Unspecified</span>
<span class="t" style="left:648px;top:515px;line-height:16px;font-size:12px;letter-spacing:-0.131px;">System.ServiceModel.Activati...</span>
<span class="t" style="left:828px;top:515px;line-height:16px;font-size:12px;letter-spacing:-0.061px;">Inh</span>
<span class="t" style="left:6px;top:535px;line-height:16px;font-size:12px;letter-spacing:-0.121px;">xoml-ISAPI-2.0</span>
<span class="t" style="left:328px;top:535px;line-height:16px;font-size:12px;letter-spacing:0.277px;">*.xoml</span>
<span class="t" style="left:448px;top:535px;line-height:16px;font-size:12px;letter-spacing:-0.363px;">Enabled</span>
<span class="t" style="left:548px;top:535px;line-height:16px;font-size:12px;letter-spacing:-0.155px;">Unspecified</span>
<span class="t" style="left:648px;top:535px;line-height:16px;font-size:12px;letter-spacing:0.027px;">IsapiModule</span>
<span class="t" style="left:828px;top:535px;line-height:16px;font-size:12px;letter-spacing:-0.061px;">Inh</span>
<span class="t" style="left:6px;top:555px;line-height:16px;font-size:12px;letter-spacing:-0.169px;">xoml-ISAPI-4.0_32bit</span>
<span class="t" style="left:328px;top:555px;line-height:16px;font-size:12px;letter-spacing:0.277px;">*.xoml</span>
<span class="t" style="left:448px;top:555px;line-height:16px;font-size:12px;letter-spacing:-0.363px;">Enabled</span>
<span class="t" style="left:548px;top:555px;line-height:16px;font-size:12px;letter-spacing:-0.155px;">Unspecified</span>
<span class="t" style="left:648px;top:555px;line-height:16px;font-size:12px;letter-spacing:0.027px;">IsapiModule</span>
<span class="t" style="left:828px;top:555px;line-height:16px;font-size:12px;letter-spacing:-0.061px;">Inh</span>
<span class="t" style="left:6px;top:575px;line-height:16px;font-size:12px;letter-spacing:-0.169px;">xoml-ISAPI-4.0_64bit</span>
<span class="t" style="left:328px;top:575px;line-height:16px;font-size:12px;letter-spacing:0.277px;">*.xoml</span>
<span class="t" style="left:448px;top:575px;line-height:16px;font-size:12px;letter-spacing:-0.363px;">Enabled</span>
<span class="t" style="left:548px;top:575px;line-height:16px;font-size:12px;letter-spacing:-0.155px;">Unspecified</span>
<span class="t" style="left:648px;top:575px;line-height:16px;font-size:12px;letter-spacing:0.027px;">IsapiModule</span>
<span class="t" style="left:828px;top:575px;line-height:16px;font-size:12px;letter-spacing:-0.061px;">Inh</span>
<span class="t" style="left:6px;top:595px;line-height:16px;font-size:12px;letter-spacing:-0.108px;">ExtensionlessUrlHandler-Integrated-4.0</span>
<span class="t" style="left:328px;top:595px;line-height:16px;font-size:12px;">*.</span>
<span class="t" style="left:448px;top:595px;line-height:16px;font-size:12px;letter-spacing:-0.363px;">Enabled</span>
<span class="t" style="left:548px;top:595px;line-height:16px;font-size:12px;letter-spacing:-0.155px;">Unspecified</span>
<span class="t" style="left:648px;top:595px;line-height:16px;font-size:12px;letter-spacing:-0.291px;">System.Web.Handlers.Transfe...</span>
<span class="t" style="left:828px;top:595px;line-height:16px;font-size:12px;letter-spacing:0.051px;">Loc</span>
</div>
<div style="left:1526px;top:248px;width:17px;height:636px;background:#f0f0f0;"></div>
<svg style="left:1530px;top:254px" width="8" height="5" viewBox="0 0 8 5"><path d="M.7 4.3L4 1l3.3 3.3" stroke="#454545" stroke-width="1.7" fill="none"/></svg>
<svg style="left:1530px;top:873px" width="8" height="5" viewBox="0 0 8 5"><path d="M.7 .7L4 4l3.3-3.3" stroke="#454545" stroke-width="1.7" fill="none"/></svg>
<div style="left:1526px;top:665px;width:15px;height:193px;background:#cdcdcd;"></div>
<div style="left:681px;top:884px;width:862px;height:17px;background:#f0f0f0;"></div>
<svg style="left:686px;top:888px" width="5" height="8" viewBox="0 0 5 8"><path d="M4.3 .7L1 4l3.3 3.3" stroke="#454545" stroke-width="1.7" fill="none"/></svg>
<svg style="left:1514px;top:888px" width="5" height="8" viewBox="0 0 5 8"><path d="M.7 .7L4 4 .7 7.3" stroke="#454545" stroke-width="1.7" fill="none"/></svg>
<div style="left:698px;top:885px;width:758px;height:15px;background:#cdcdcd;"></div>
<div style="left:673px;top:918px;width:99px;height:20px;background:#ffffff;border:1px solid #3c8fdc"></div>
<svg style="left:675px;top:920px" width="16" height="16" viewBox="0 0 16 16"><rect x=".5" y=".5" width="15" height="15" fill="#fafafa" stroke="#8c8c8c" stroke-width=".9"/><rect x="1" y="1" width="14" height="3" fill="#cfcfcf"/><path d="M2 2.5h2M6 2.5h2M10 2.5h2" stroke="#7b7b7b" stroke-width="1"/><rect x="2.5" y="6" width="4" height="8" fill="#fff" stroke="#9a9a9a" stroke-width=".7"/><path d="M8.5 7h5M8.5 9.5h5M8.5 12h5" stroke="#8b8b8b" stroke-width="1"/></svg>
<span class="t" style="left:694px;top:920px;line-height:16px;font-size:12px;letter-spacing:-0.345px;">Features View</span>
<svg style="left:774px;top:920px" width="16" height="16" viewBox="0 0 16 16"><path d="M.6 2.5h4.5l1 1.3h5.5v9.8H.6z" fill="#e9c960" stroke="#c2a044" stroke-width=".7"/><path d="M1 5h10.3v8.3H1z" fill="url(#fold)"/><rect x="8.5" y="6.5" width="6.5" height="8.5" fill="#fdfdfd" stroke="#7c8aa0" stroke-width=".8"/><path d="M10 9.5h3.5M10 11.5h3.5M10 13.2h2.5" stroke="#3b6fd0" stroke-width=".8"/></svg>
<span class="t" style="left:793px;top:920px;line-height:16px;font-size:12px;letter-spacing:-0.013px;">Content View</span>
<div style="left:1562px;top:142px;width:200px;height:800px;background:linear-gradient(90deg,#fbfbfb,#f0f0f0);border:1px solid #919391"></div>
<div style="left:1563px;top:143px;width:198px;height:23px;background:#bebcbe;"></div>
<span class="t" style="left:1570px;top:147px;line-height:16px;font-size:12px;font-weight:bold;letter-spacing:-0.429px;">Actions</span>
<span class="t" style="left:1592px;top:173px;line-height:16px;font-size:12px;color:#3692dc;letter-spacing:-0.019px;">Add Managed Handler...</span>
<span class="t" style="left:1592px;top:193px;line-height:16px;font-size:12px;color:#3692dc;letter-spacing:-0.061px;">Add Script Map...</span>
<span class="t" style="left:1592px;top:213px;line-height:16px;font-size:12px;color:#3692dc;letter-spacing:-0.040px;">Add Wildcard Script Map...</span>
<span class="t" style="left:1592px;top:233px;line-height:16px;font-size:12px;color:#3692dc;letter-spacing:0.123px;">Add Module Mapping...</span>
<span class="t" style="left:1592px;top:258px;line-height:16px;font-size:12px;color:#3692dc;letter-spacing:-0.240px;">Edit...</span>
<span class="t" style="left:1592px;top:278px;line-height:16px;font-size:12px;color:#3692dc;letter-spacing:-0.281px;text-decoration:underline;">Remove</span>
<span class="t" style="left:1592px;top:303px;line-height:16px;font-size:12px;color:#3692dc;letter-spacing:-0.261px;">Edit Feature Permissions...</span>
<span class="t" style="left:1592px;top:323px;line-height:16px;font-size:12px;color:#3692dc;letter-spacing:-0.302px;">Revert To Parent</span>
<span class="t" style="left:1592px;top:343px;line-height:16px;font-size:12px;color:#3692dc;letter-spacing:-0.208px;">View Ordered List...</span>
<span class="t" style="left:1592px;top:368px;line-height:16px;font-size:12px;color:#3692dc;letter-spacing:0.080px;">Help</span>
<div style="left:1566px;top:252px;width:192px;height:1px;background:#a7a7a7;"></div>
<div style="left:1566px;top:297px;width:192px;height:1px;background:#a7a7a7;"></div>
<div style="left:1566px;top:362px;width:192px;height:1px;background:#a7a7a7;"></div>
<svg style="left:1568px;top:278px" width="15" height="14" viewBox="0 0 15 14"><defs><linearGradient id="rx" x1="0" y1="0" x2="1" y2="1"><stop offset="0" stop-color="#ff5a4a"/><stop offset=".45" stop-color="#ea1612"/><stop offset="1" stop-color="#a50a0a"/></linearGradient></defs><path d="M2.2 2.2L12.5 12M12.5 2L2 12.2" stroke="url(#rx)" stroke-width="3.1" stroke-linecap="round" fill="none"/></svg>
<svg style="left:1568px;top:367px" width="16" height="16" viewBox="0 0 16 16"><circle cx="8" cy="8" r="7.4" fill="#d8dde8" stroke="#8c93a0" stroke-width=".8"/><circle cx="8" cy="8" r="6" fill="url(#hq)"/><text x="8" y="12" font-size="11" font-weight="bold" fill="#fff" text-anchor="middle" font-family="Liberation Sans,sans-serif">?</text></svg>
<svg style="left:1603px;top:287px" width="13" height="20" viewBox="0 0 13 20"><path d="M.5 .7v15.6l3.6-3.4 2.5 5.9 2.2-.9-2.5-5.8h5.1z" fill="#fff" stroke="#000" stroke-width="1"/></svg>
<div style="left:339px;top:942px;width:1424px;height:1px;background:#fafafa;"></div>
<div style="left:339px;top:943px;width:1424px;height:23px;background:linear-gradient(90deg,#f3f3f3,#ebeaeb 30%,#eeecec 55%,#f6f6f6 85%,#f9f9f9);"></div>
<span class="t" style="left:345px;top:947px;line-height:16px;font-size:12px;letter-spacing:0.019px;">Configuration: &#x27;Default Web Site&#x27; web.config</span>
<svg style="left:1736px;top:947px" width="16" height="16" viewBox="0 0 16 16"><circle cx="4.8" cy="4.8" r="4.3" fill="url(#gg)" stroke="#123a8c" stroke-width=".5"/><path d="M1.36 3.51q1.29 -2.58 3.44 -2.37q-0.21 1.94 -1.29 2.37q-0.43 2.15 -1.50 1.29z" fill="#3fc22e"/><path d="M3.29 6.09q1.94 -0.86 3.01 0.43q-0.43 1.94 -1.94 2.15q-1.07 -0.86 -1.07 -2.58z" fill="#2fa824"/><path d="M7.17 2.43q1.50 1.29 1.63 3.44q-1.29 -0.43 -1.63 -3.44z" fill="#4cc238"/><ellipse cx="3.94" cy="2.86" rx="1.72" ry="1.07" fill="#fff" opacity=".35"/><rect x="7.5" y="2.5" width="6.5" height="12.5" fill="#d5dae0" stroke="#59626d" stroke-width=".8"/><path d="M9 5h3.6M9 7.2h3.6M9 9.4h3.6" stroke="#68717c" stroke-width=".9"/><rect x="11.3" y="12.2" width="1.7" height="1.7" fill="#50e028"/></svg>
<svg style="left:1755px;top:953px" width="6" height="10" viewBox="0 0 6 10"><g fill="#9a9a9a"><rect x="3" y="0" width="2" height="2"/><rect x="3" y="4" width="2" height="2"/><rect x="3" y="8" width="2" height="2"/><rect x="0" y="4" width="1.5" height="2"/><rect x="0" y="8" width="1.5" height="2"/></g></svg>
<span class="t" style="left:1599px;top:945px;line-height:26px;font-size:20.5px;color:rgba(125,125,125,.48);letter-spacing:-0.299px;">Activate Windows</span>
<span class="t" style="left:1599px;top:971px;line-height:20px;font-size:15.5px;color:rgba(255,255,255,.42);letter-spacing:-0.248px;">Go to Settings to activate Windows.</span>
<div style="left:0px;top:1040px;width:1920px;height:1px;background:#2a3b36;"></div>
<div style="left:933px;top:1039px;width:48px;height:2px;background:#5a5a5a;"></div>
<span class="lbl" style="left:282px;width:120px;top:968px;letter-spacing:-0.233px;padding-left:-0.233px">Fiddler 4</span>
<span class="lbl" style="left:358px;width:120px;top:968px;letter-spacing:-0.235px;padding-left:-0.235px">desktop.ini</span>
</body></html>
